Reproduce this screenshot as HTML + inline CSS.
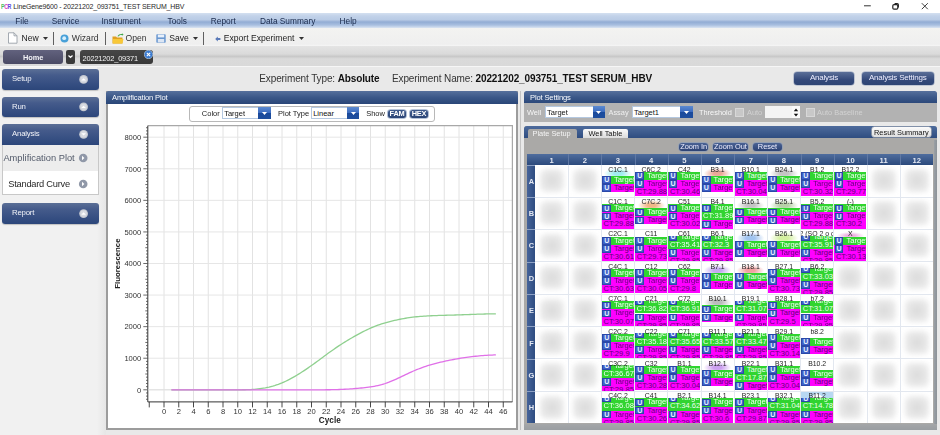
<!DOCTYPE html><html><head><meta charset="utf-8"><style>
html,body{margin:0;padding:0;width:940px;height:435px;overflow:hidden;background:#ebebeb;font-family:"Liberation Sans",sans-serif}
#wrap{position:absolute;left:0;top:0;width:940px;height:435px;overflow:hidden;filter:blur(0.4px)}
svg text{font-family:"Liberation Sans",sans-serif}
</style></head><body><div id="wrap">
<div style="position:absolute;left:0px;top:0px;width:940px;height:13px;background:#fff"></div>
<div style="position:absolute;left:1.0px;top:2.9px;font-size:7.4px;line-height:1;color:#333;font-weight:700;white-space:nowrap;letter-spacing:-0.6px;transform:scaleX(0.72);transform-origin:0 0"><span style="color:#48c060">P</span><span style="color:#e040b8">C</span><span style="color:#5a48e0">R</span></div>
<div style="position:absolute;left:13.3px;top:3.2px;font-size:7px;line-height:1;color:#2a2a2a;font-weight:400;white-space:nowrap;letter-spacing:-0.15px">LineGene9600 - 20221202_093751_TEST SERUM_HBV</div>
<svg style="position:absolute;left:860px;top:0" width="80" height="13"><path d="M4 5.8h6.8" stroke="#333" stroke-width="1"/><rect x="32.8" y="4.6" width="5" height="4.6" rx="1.2" fill="none" stroke="#222" stroke-width="1.2"/><path d="M34.6 3.6h2.6a1.2 1.2 0 0 1 1.2 1.2v2.6" fill="none" stroke="#222" stroke-width="1.1"/><path d="M61.8 3.2l6 6M67.8 3.2l-6 6" stroke="#333" stroke-width="0.95"/></svg>
<div style="position:absolute;left:0px;top:13px;width:940px;height:15.3px;background:linear-gradient(#d4e0f0 0%,#c2d2e9 20%,#b9cbe5 45%,#92acd4 60%,#a8bfe0 80%,#dae4f2 100%)"></div>
<div style="position:absolute;left:15.3px;top:17.2px;font-size:8.3px;line-height:1;color:#1a2a4c;font-weight:400;white-space:nowrap;">File</div>
<div style="position:absolute;left:51.7px;top:17.2px;font-size:8.3px;line-height:1;color:#1a2a4c;font-weight:400;white-space:nowrap;">Service</div>
<div style="position:absolute;left:101.5px;top:17.2px;font-size:8.3px;line-height:1;color:#1a2a4c;font-weight:400;white-space:nowrap;">Instrument</div>
<div style="position:absolute;left:167.6px;top:17.2px;font-size:8.3px;line-height:1;color:#1a2a4c;font-weight:400;white-space:nowrap;">Tools</div>
<div style="position:absolute;left:210.8px;top:17.2px;font-size:8.3px;line-height:1;color:#1a2a4c;font-weight:400;white-space:nowrap;">Report</div>
<div style="position:absolute;left:260px;top:17.2px;font-size:8.3px;line-height:1;color:#1a2a4c;font-weight:400;white-space:nowrap;">Data Summary</div>
<div style="position:absolute;left:339.6px;top:17.2px;font-size:8.3px;line-height:1;color:#1a2a4c;font-weight:400;white-space:nowrap;">Help</div>
<div style="position:absolute;left:0px;top:28.3px;width:940px;height:18.1px;background:linear-gradient(#f3f3f1,#efefef 90%,#f6f6f6 100%)"></div>
<svg style="position:absolute;left:7px;top:32px" width="12" height="12" viewBox="0 0 12 12"><path d="M1.5 0.8h5.5l3 3v7.4h-8.5z" fill="#fff" stroke="#9aa0a8" stroke-width="0.9"/><path d="M7 0.8v3h3" fill="none" stroke="#9aa0a8" stroke-width="0.9"/></svg>
<div style="position:absolute;left:21.5px;top:34.2px;font-size:8.6px;line-height:1;color:#222;font-weight:400;white-space:nowrap;">New</div>
<svg style="position:absolute;left:43px;top:37px" width="5" height="3"><path d="M0 0h5l-2.5 3z" fill="#333"/></svg>
<div style="position:absolute;left:52.5px;top:31.8px;width:1px;height:13px;background:#606060"></div>
<svg style="position:absolute;left:60px;top:34px" width="9" height="9"><circle cx="4.5" cy="4.5" r="4" fill="#48a0d8"/><circle cx="4.2" cy="4.2" r="1.9" fill="#d8f0fc"/></svg>
<div style="position:absolute;left:71.8px;top:34.2px;font-size:8.6px;line-height:1;color:#333;font-weight:400;white-space:nowrap;">Wizard</div>
<div style="position:absolute;left:105px;top:31.8px;width:1px;height:13px;background:#606060"></div>
<svg style="position:absolute;left:111.5px;top:32.5px" width="12" height="11" viewBox="0 0 12 11"><path d="M0.5 3.5h3.5l1 1h5.5v6h-10z" fill="#e0a020"/><path d="M0.8 6h10.7l-1.2 4.6h-9.5z" fill="#f8c838"/><path d="M5.5 3.2c1-2 3-2.6 4.6-2.2l-0.3-0.9 1.8 1.6-1.9 1.1 0.3-0.8c-1.4-0.3-2.9 0.2-3.5 1.4z" fill="#40a848"/></svg>
<div style="position:absolute;left:125.5px;top:34.2px;font-size:8.6px;line-height:1;color:#333;font-weight:400;white-space:nowrap;">Open</div>
<svg style="position:absolute;left:156px;top:33.5px" width="10" height="9" viewBox="0 0 10 9"><rect x="0.3" y="0.3" width="9.4" height="8.4" rx="0.8" fill="#6a98d0"/><rect x="1.8" y="0.6" width="6.4" height="2.8" fill="#e8f0fa"/><rect x="1.8" y="5" width="6.4" height="3.4" fill="#dce6f4"/></svg>
<div style="position:absolute;left:169.2px;top:34.2px;font-size:8.6px;line-height:1;color:#222;font-weight:400;white-space:nowrap;">Save</div>
<svg style="position:absolute;left:193px;top:37px" width="5" height="3"><path d="M0 0h5l-2.5 3z" fill="#333"/></svg>
<div style="position:absolute;left:203px;top:31.8px;width:1px;height:13px;background:#606060"></div>
<svg style="position:absolute;left:214.5px;top:35.5px" width="6" height="6"><path d="M0.2 3l2.6-2.6v1.6h2.6v2h-2.6v1.6z" fill="#5a7ab8"/></svg>
<div style="position:absolute;left:223.7px;top:34.2px;font-size:8.6px;line-height:1;color:#222;font-weight:400;white-space:nowrap;">Export Experiment</div>
<svg style="position:absolute;left:298.5px;top:37px" width="5" height="3"><path d="M0 0h5l-2.5 3z" fill="#333"/></svg>
<div style="position:absolute;left:0px;top:46.4px;width:940px;height:19.6px;background:linear-gradient(#e4e4e4 0%,#dadada 40%,#c8c8c8 52%,#dadada 64%,#d9d9d9 100%)"></div>
<div style="position:absolute;left:0px;top:66px;width:940px;height:1.2px;background:#f6f6f6"></div>
<div style="position:absolute;left:3.2px;top:50.4px;width:60px;height:13.8px;background:linear-gradient(#62627e,#4a4a64);border-radius:3px"></div>
<div style="position:absolute;left:3.2px;top:54px;font-size:7.4px;line-height:1;color:#f4f4f8;font-weight:700;white-space:nowrap;width:60px;text-align:center;letter-spacing:-0.1px">Home</div>
<div style="position:absolute;left:66px;top:50.4px;width:9px;height:13.8px;background:#3a3a3a;border-radius:2px"></div>
<svg style="position:absolute;left:68px;top:55px" width="5" height="4"><path d="M0.5 0.5l2 2 2-2" fill="none" stroke="#fff" stroke-width="1.2"/></svg>
<div style="position:absolute;left:80.4px;top:50.4px;width:72.4px;height:13.8px;background:linear-gradient(#464646,#383838);border-radius:3px"></div>
<div style="position:absolute;left:82.5px;top:54.8px;font-size:7.4px;line-height:1;color:#f4f4f4;font-weight:400;white-space:nowrap;letter-spacing:-0.15px">20221202_09371</div>
<svg style="position:absolute;left:144px;top:50px" width="9" height="9"><circle cx="4.5" cy="4.5" r="4.2" fill="#3a7ad0" stroke="#cde" stroke-width="0.6"/><path d="M2.8 2.8l3.4 3.4M6.2 2.8l-3.4 3.4" stroke="#fff" stroke-width="1.1"/></svg>
<div style="position:absolute;left:0px;top:67px;width:940px;height:368px;background:#e9e9e9"></div>
<div style="position:absolute;left:0px;top:67px;width:97px;height:368px;background:#f1f1f1"></div>
<div style="position:absolute;left:97px;top:91px;width:9px;height:344px;background:linear-gradient(90deg,#f1f1f1,#e6e6e6)"></div>
<div style="position:absolute;left:1.9px;top:69px;width:96.9px;height:20.8px;background:linear-gradient(#5b6f96 0%,#455b8b 30%,#364f82 70%,#2c467a 100%);border-radius:3px;box-shadow:0 1px 1px rgba(0,0,0,0.2)"></div><div style="position:absolute;left:12px;top:75.30000000000001px;font-size:7.8px;line-height:1;color:#f0f2f8;font-weight:400;white-space:nowrap;letter-spacing:-0.2px">Setup</div><svg style="position:absolute;left:0;top:0" width="100" height="435"><circle cx="83.6" cy="79.4" r="4.4" fill="#c4c8d0"/><circle cx="83.6" cy="79.4" r="3.2" fill="#d8dbe2"/><path d="M81.3 80.5l2.3-2.3 2.3 2.3z" fill="#fff"/></svg>
<div style="position:absolute;left:1.9px;top:96.7px;width:96.9px;height:20.3px;background:linear-gradient(#5b6f96 0%,#455b8b 30%,#364f82 70%,#2c467a 100%);border-radius:3px;box-shadow:0 1px 1px rgba(0,0,0,0.2)"></div><div style="position:absolute;left:12px;top:102.75000000000001px;font-size:7.8px;line-height:1;color:#f0f2f8;font-weight:400;white-space:nowrap;letter-spacing:-0.2px">Run</div><svg style="position:absolute;left:0;top:0" width="100" height="435"><circle cx="83.6" cy="106.85000000000001" r="4.4" fill="#c4c8d0"/><circle cx="83.6" cy="106.85000000000001" r="3.2" fill="#d8dbe2"/><path d="M81.3 107.95l2.3-2.3 2.3 2.3z" fill="#fff"/></svg>
<div style="position:absolute;left:1.9px;top:123.8px;width:96.9px;height:21px;background:linear-gradient(#5b6f96 0%,#455b8b 30%,#364f82 70%,#2c467a 100%);border-radius:3px 3px 0 0;box-shadow:0 1px 1px rgba(0,0,0,0.2)"></div><div style="position:absolute;left:12px;top:130.20000000000002px;font-size:7.8px;line-height:1;color:#f0f2f8;font-weight:400;white-space:nowrap;letter-spacing:-0.2px">Analysis</div><svg style="position:absolute;left:0;top:0" width="100" height="435"><circle cx="83.6" cy="134.3" r="4.4" fill="#c4c8d0"/><circle cx="83.6" cy="134.3" r="3.2" fill="#d8dbe2"/><path d="M81.3 133.20000000000002l2.3 2.3 2.3-2.3z" fill="#fff"/></svg>
<div style="position:absolute;left:1.9px;top:144.8px;width:96.9px;height:25.8px;background:#ededed;border-left:1px solid #c8c8c8;border-right:1px solid #c8c8c8;box-sizing:border-box"></div>
<div style="position:absolute;left:3.4px;top:154.4px;font-size:9.3px;line-height:1;color:#525a6a;font-weight:400;white-space:nowrap;letter-spacing:0px">Amplification Plot</div>
<div style="position:absolute;left:1.9px;top:170.6px;width:96.9px;height:24.7px;background:#fff;border:1px solid #c8c8c8;border-top:none;box-sizing:border-box"></div>
<div style="position:absolute;left:8.3px;top:180px;font-size:9.3px;line-height:1;color:#282828;font-weight:400;white-space:nowrap;letter-spacing:-0.25px">Standard Curve</div>
<svg style="position:absolute;left:78px;top:153px" width="11" height="10"><circle cx="5.2" cy="5" r="4.3" fill="#9098a8"/><path d="M4 2.8l2.4 2.2-2.4 2.2z" fill="#fff"/></svg>
<svg style="position:absolute;left:78px;top:178.7px" width="11" height="10"><circle cx="5.2" cy="5" r="4.3" fill="#9098a8"/><path d="M4 2.8l2.4 2.2-2.4 2.2z" fill="#fff"/></svg>
<div style="position:absolute;left:1.9px;top:203.4px;width:96.9px;height:20.3px;background:linear-gradient(#5b6f96 0%,#455b8b 30%,#364f82 70%,#2c467a 100%);border-radius:3px;box-shadow:0 1px 1px rgba(0,0,0,0.2)"></div><div style="position:absolute;left:12px;top:209.45000000000002px;font-size:7.8px;line-height:1;color:#f0f2f8;font-weight:400;white-space:nowrap;letter-spacing:-0.2px">Report</div><svg style="position:absolute;left:0;top:0" width="100" height="435"><circle cx="83.6" cy="213.55" r="4.4" fill="#c4c8d0"/><circle cx="83.6" cy="213.55" r="3.2" fill="#d8dbe2"/><path d="M81.3 214.65l2.3-2.3 2.3 2.3z" fill="#fff"/></svg>
<div style="position:absolute;left:259.3px;top:74.2px;font-size:10px;line-height:1;color:#333;font-weight:400;white-space:nowrap;letter-spacing:-0.12px">Experiment Type: <b style="color:#111">Absolute</b></div>
<div style="position:absolute;left:392px;top:74.2px;font-size:10px;line-height:1;color:#333;font-weight:400;white-space:nowrap;letter-spacing:-0.12px">Experiment Name: <b style="color:#111">20221202_093751_TEST SERUM_HBV</b></div>
<div style="position:absolute;left:794px;top:71.8px;width:60px;height:12.8px;background:linear-gradient(#5b6f98,#34497a 60%,#2e4574);border-radius:3px;box-shadow:0 0 0 0.6px #9aa6c0"><div style="font-size:8px;color:#eef;line-height:12.8px;text-align:center;white-space:nowrap;letter-spacing:-0.2px">Analysis</div></div>
<div style="position:absolute;left:861.8px;top:71.8px;width:71.8px;height:12.8px;background:linear-gradient(#5b6f98,#34497a 60%,#2e4574);border-radius:3px;box-shadow:0 0 0 0.6px #9aa6c0"><div style="font-size:8px;color:#eef;line-height:12.8px;text-align:center;white-space:nowrap;letter-spacing:-0.2px">Analysis Settings</div></div>
<div style="position:absolute;left:105.8px;top:90.8px;width:412.5px;height:339px;background:#fff;border:2px solid #9c9c9c;border-top:none;box-sizing:border-box"></div>
<div style="position:absolute;left:105.8px;top:90.8px;width:412.5px;height:13px;background:linear-gradient(#56709c,#3a5788 50%,#2a4678);border-radius:2.5px 2.5px 0 0"></div>
<div style="position:absolute;left:112px;top:93.6px;font-size:7.6px;line-height:1;color:#fafcff;font-weight:400;white-space:nowrap;letter-spacing:-0.15px">Amplification Plot</div>
<div style="position:absolute;left:189px;top:106px;width:246px;height:15.5px;border:1px solid #b8b8b8;border-radius:3px;background:#fff;box-sizing:border-box"></div>
<div style="position:absolute;left:201.8px;top:110.3px;font-size:7.5px;line-height:1;color:#222;font-weight:400;white-space:nowrap;">Color</div>
<div style="position:absolute;left:222.2px;top:107.4px;width:49.1px;height:11.4px;background:#fff;border:1px solid #b4c8e0;box-sizing:border-box"></div><div style="position:absolute;left:224.2px;top:110.4px;font-size:7.5px;line-height:1;color:#111;font-weight:400;white-space:nowrap;">Target</div><div style="position:absolute;left:258.3px;top:107.4px;width:13.0px;height:11.4px;background:linear-gradient(#5c8ad0 0%,#3c6cc0 48%,#1a4a9c 52%,#1e4e9e 100%)"></div><svg style="position:absolute;left:262.3px;top:111.9px" width="5" height="3.5"><path d="M0 0h5l-2.5 3z" fill="#fff"/></svg>
<div style="position:absolute;left:278px;top:110.3px;font-size:7.5px;line-height:1;color:#222;font-weight:400;white-space:nowrap;">Plot Type</div>
<div style="position:absolute;left:311.2px;top:107.4px;width:48.2px;height:11.4px;background:#fff;border:1px solid #b4c8e0;box-sizing:border-box"></div><div style="position:absolute;left:313.2px;top:110.4px;font-size:7.5px;line-height:1;color:#111;font-weight:400;white-space:nowrap;">Linear</div><div style="position:absolute;left:347px;top:107.4px;width:12.399999999999977px;height:11.4px;background:linear-gradient(#5c8ad0 0%,#3c6cc0 48%,#1a4a9c 52%,#1e4e9e 100%)"></div><svg style="position:absolute;left:350.70000000000005px;top:111.9px" width="5" height="3.5"><path d="M0 0h5l-2.5 3z" fill="#fff"/></svg>
<div style="position:absolute;left:366.2px;top:110.3px;font-size:7.5px;line-height:1;color:#222;font-weight:400;white-space:nowrap;">Show</div>
<div style="position:absolute;left:388px;top:109.6px;width:18.1px;height:8.6px;background:linear-gradient(#3e5a8c,#2a4476);border-radius:2.5px;box-shadow:0 0 0 0.8px #9fb0cc"><div style="font-size:7.4px;font-weight:700;color:#fff;line-height:8.6px;text-align:center;letter-spacing:-0.2px">FAM</div></div>
<div style="position:absolute;left:409.6px;top:109.6px;width:18.8px;height:8.6px;background:linear-gradient(#3e5a8c,#2a4476);border-radius:2.5px;box-shadow:0 0 0 0.8px #9fb0cc"><div style="font-size:7.4px;font-weight:700;color:#fff;line-height:8.6px;text-align:center;letter-spacing:-0.2px">HEX</div></div>
<svg style="position:absolute;left:0;top:0" width="940" height="435">
<line x1="164.0" y1="125.7" x2="164.0" y2="401.9" stroke="#e2e2e2" stroke-width="1"/>
<line x1="178.75" y1="125.7" x2="178.75" y2="401.9" stroke="#e2e2e2" stroke-width="1"/>
<line x1="193.5" y1="125.7" x2="193.5" y2="401.9" stroke="#e2e2e2" stroke-width="1"/>
<line x1="208.25" y1="125.7" x2="208.25" y2="401.9" stroke="#e2e2e2" stroke-width="1"/>
<line x1="223.0" y1="125.7" x2="223.0" y2="401.9" stroke="#e2e2e2" stroke-width="1"/>
<line x1="237.75" y1="125.7" x2="237.75" y2="401.9" stroke="#e2e2e2" stroke-width="1"/>
<line x1="252.5" y1="125.7" x2="252.5" y2="401.9" stroke="#e2e2e2" stroke-width="1"/>
<line x1="267.25" y1="125.7" x2="267.25" y2="401.9" stroke="#e2e2e2" stroke-width="1"/>
<line x1="282.0" y1="125.7" x2="282.0" y2="401.9" stroke="#e2e2e2" stroke-width="1"/>
<line x1="296.75" y1="125.7" x2="296.75" y2="401.9" stroke="#e2e2e2" stroke-width="1"/>
<line x1="311.5" y1="125.7" x2="311.5" y2="401.9" stroke="#e2e2e2" stroke-width="1"/>
<line x1="326.25" y1="125.7" x2="326.25" y2="401.9" stroke="#e2e2e2" stroke-width="1"/>
<line x1="341.0" y1="125.7" x2="341.0" y2="401.9" stroke="#e2e2e2" stroke-width="1"/>
<line x1="355.75" y1="125.7" x2="355.75" y2="401.9" stroke="#e2e2e2" stroke-width="1"/>
<line x1="370.5" y1="125.7" x2="370.5" y2="401.9" stroke="#e2e2e2" stroke-width="1"/>
<line x1="385.25" y1="125.7" x2="385.25" y2="401.9" stroke="#e2e2e2" stroke-width="1"/>
<line x1="400.0" y1="125.7" x2="400.0" y2="401.9" stroke="#e2e2e2" stroke-width="1"/>
<line x1="414.75" y1="125.7" x2="414.75" y2="401.9" stroke="#e2e2e2" stroke-width="1"/>
<line x1="429.5" y1="125.7" x2="429.5" y2="401.9" stroke="#e2e2e2" stroke-width="1"/>
<line x1="444.25" y1="125.7" x2="444.25" y2="401.9" stroke="#e2e2e2" stroke-width="1"/>
<line x1="459.0" y1="125.7" x2="459.0" y2="401.9" stroke="#e2e2e2" stroke-width="1"/>
<line x1="473.75" y1="125.7" x2="473.75" y2="401.9" stroke="#e2e2e2" stroke-width="1"/>
<line x1="488.5" y1="125.7" x2="488.5" y2="401.9" stroke="#e2e2e2" stroke-width="1"/>
<line x1="503.25" y1="125.7" x2="503.25" y2="401.9" stroke="#e2e2e2" stroke-width="1"/>
<line x1="147.8" y1="389.8" x2="512.4" y2="389.8" stroke="#e6e6e6" stroke-width="1"/>
<line x1="147.8" y1="358.225" x2="512.4" y2="358.225" stroke="#e6e6e6" stroke-width="1"/>
<line x1="147.8" y1="326.65000000000003" x2="512.4" y2="326.65000000000003" stroke="#e6e6e6" stroke-width="1"/>
<line x1="147.8" y1="295.07500000000005" x2="512.4" y2="295.07500000000005" stroke="#e6e6e6" stroke-width="1"/>
<line x1="147.8" y1="263.5" x2="512.4" y2="263.5" stroke="#e6e6e6" stroke-width="1"/>
<line x1="147.8" y1="231.925" x2="512.4" y2="231.925" stroke="#e6e6e6" stroke-width="1"/>
<line x1="147.8" y1="200.35000000000002" x2="512.4" y2="200.35000000000002" stroke="#e6e6e6" stroke-width="1"/>
<line x1="147.8" y1="168.775" x2="512.4" y2="168.775" stroke="#e6e6e6" stroke-width="1"/>
<line x1="147.8" y1="137.20000000000002" x2="512.4" y2="137.20000000000002" stroke="#e6e6e6" stroke-width="1"/>
<path d="M147.8 125.7H512.4V401.9" fill="none" stroke="#a8a8a8" stroke-width="1.2"/>
<line x1="147.8" y1="125.7" x2="147.8" y2="401.9" stroke="#333" stroke-width="1"/>
<line x1="147.8" y1="401.9" x2="512.4" y2="401.9" stroke="#333" stroke-width="1"/>
<line x1="146.0" y1="399.27250000000004" x2="147.8" y2="399.27250000000004" stroke="#444" stroke-width="0.8"/>
<line x1="146.0" y1="396.115" x2="147.8" y2="396.115" stroke="#444" stroke-width="0.8"/>
<line x1="146.0" y1="392.95750000000004" x2="147.8" y2="392.95750000000004" stroke="#444" stroke-width="0.8"/>
<line x1="143.3" y1="389.8" x2="147.8" y2="389.8" stroke="#444" stroke-width="0.8"/>
<line x1="146.0" y1="386.6425" x2="147.8" y2="386.6425" stroke="#444" stroke-width="0.8"/>
<line x1="146.0" y1="383.485" x2="147.8" y2="383.485" stroke="#444" stroke-width="0.8"/>
<line x1="146.0" y1="380.3275" x2="147.8" y2="380.3275" stroke="#444" stroke-width="0.8"/>
<line x1="146.0" y1="377.17" x2="147.8" y2="377.17" stroke="#444" stroke-width="0.8"/>
<line x1="145.3" y1="374.0125" x2="147.8" y2="374.0125" stroke="#444" stroke-width="0.8"/>
<line x1="146.0" y1="370.855" x2="147.8" y2="370.855" stroke="#444" stroke-width="0.8"/>
<line x1="146.0" y1="367.6975" x2="147.8" y2="367.6975" stroke="#444" stroke-width="0.8"/>
<line x1="146.0" y1="364.54" x2="147.8" y2="364.54" stroke="#444" stroke-width="0.8"/>
<line x1="146.0" y1="361.3825" x2="147.8" y2="361.3825" stroke="#444" stroke-width="0.8"/>
<line x1="143.3" y1="358.225" x2="147.8" y2="358.225" stroke="#444" stroke-width="0.8"/>
<line x1="146.0" y1="355.0675" x2="147.8" y2="355.0675" stroke="#444" stroke-width="0.8"/>
<line x1="146.0" y1="351.91" x2="147.8" y2="351.91" stroke="#444" stroke-width="0.8"/>
<line x1="146.0" y1="348.7525" x2="147.8" y2="348.7525" stroke="#444" stroke-width="0.8"/>
<line x1="146.0" y1="345.595" x2="147.8" y2="345.595" stroke="#444" stroke-width="0.8"/>
<line x1="145.3" y1="342.4375" x2="147.8" y2="342.4375" stroke="#444" stroke-width="0.8"/>
<line x1="146.0" y1="339.28000000000003" x2="147.8" y2="339.28000000000003" stroke="#444" stroke-width="0.8"/>
<line x1="146.0" y1="336.1225" x2="147.8" y2="336.1225" stroke="#444" stroke-width="0.8"/>
<line x1="146.0" y1="332.96500000000003" x2="147.8" y2="332.96500000000003" stroke="#444" stroke-width="0.8"/>
<line x1="146.0" y1="329.8075" x2="147.8" y2="329.8075" stroke="#444" stroke-width="0.8"/>
<line x1="143.3" y1="326.65000000000003" x2="147.8" y2="326.65000000000003" stroke="#444" stroke-width="0.8"/>
<line x1="146.0" y1="323.4925" x2="147.8" y2="323.4925" stroke="#444" stroke-width="0.8"/>
<line x1="146.0" y1="320.33500000000004" x2="147.8" y2="320.33500000000004" stroke="#444" stroke-width="0.8"/>
<line x1="146.0" y1="317.1775" x2="147.8" y2="317.1775" stroke="#444" stroke-width="0.8"/>
<line x1="146.0" y1="314.02" x2="147.8" y2="314.02" stroke="#444" stroke-width="0.8"/>
<line x1="145.3" y1="310.8625" x2="147.8" y2="310.8625" stroke="#444" stroke-width="0.8"/>
<line x1="146.0" y1="307.70500000000004" x2="147.8" y2="307.70500000000004" stroke="#444" stroke-width="0.8"/>
<line x1="146.0" y1="304.5475" x2="147.8" y2="304.5475" stroke="#444" stroke-width="0.8"/>
<line x1="146.0" y1="301.39" x2="147.8" y2="301.39" stroke="#444" stroke-width="0.8"/>
<line x1="146.0" y1="298.2325" x2="147.8" y2="298.2325" stroke="#444" stroke-width="0.8"/>
<line x1="143.3" y1="295.07500000000005" x2="147.8" y2="295.07500000000005" stroke="#444" stroke-width="0.8"/>
<line x1="146.0" y1="291.9175" x2="147.8" y2="291.9175" stroke="#444" stroke-width="0.8"/>
<line x1="146.0" y1="288.76" x2="147.8" y2="288.76" stroke="#444" stroke-width="0.8"/>
<line x1="146.0" y1="285.6025" x2="147.8" y2="285.6025" stroke="#444" stroke-width="0.8"/>
<line x1="146.0" y1="282.44500000000005" x2="147.8" y2="282.44500000000005" stroke="#444" stroke-width="0.8"/>
<line x1="145.3" y1="279.2875" x2="147.8" y2="279.2875" stroke="#444" stroke-width="0.8"/>
<line x1="146.0" y1="276.13" x2="147.8" y2="276.13" stroke="#444" stroke-width="0.8"/>
<line x1="146.0" y1="272.9725" x2="147.8" y2="272.9725" stroke="#444" stroke-width="0.8"/>
<line x1="146.0" y1="269.815" x2="147.8" y2="269.815" stroke="#444" stroke-width="0.8"/>
<line x1="146.0" y1="266.6575" x2="147.8" y2="266.6575" stroke="#444" stroke-width="0.8"/>
<line x1="143.3" y1="263.5" x2="147.8" y2="263.5" stroke="#444" stroke-width="0.8"/>
<line x1="146.0" y1="260.34250000000003" x2="147.8" y2="260.34250000000003" stroke="#444" stroke-width="0.8"/>
<line x1="146.0" y1="257.185" x2="147.8" y2="257.185" stroke="#444" stroke-width="0.8"/>
<line x1="146.0" y1="254.0275" x2="147.8" y2="254.0275" stroke="#444" stroke-width="0.8"/>
<line x1="146.0" y1="250.87" x2="147.8" y2="250.87" stroke="#444" stroke-width="0.8"/>
<line x1="145.3" y1="247.7125" x2="147.8" y2="247.7125" stroke="#444" stroke-width="0.8"/>
<line x1="146.0" y1="244.555" x2="147.8" y2="244.555" stroke="#444" stroke-width="0.8"/>
<line x1="146.0" y1="241.3975" x2="147.8" y2="241.3975" stroke="#444" stroke-width="0.8"/>
<line x1="146.0" y1="238.24" x2="147.8" y2="238.24" stroke="#444" stroke-width="0.8"/>
<line x1="146.0" y1="235.0825" x2="147.8" y2="235.0825" stroke="#444" stroke-width="0.8"/>
<line x1="143.3" y1="231.925" x2="147.8" y2="231.925" stroke="#444" stroke-width="0.8"/>
<line x1="146.0" y1="228.7675" x2="147.8" y2="228.7675" stroke="#444" stroke-width="0.8"/>
<line x1="146.0" y1="225.61" x2="147.8" y2="225.61" stroke="#444" stroke-width="0.8"/>
<line x1="146.0" y1="222.45250000000001" x2="147.8" y2="222.45250000000001" stroke="#444" stroke-width="0.8"/>
<line x1="146.0" y1="219.29500000000002" x2="147.8" y2="219.29500000000002" stroke="#444" stroke-width="0.8"/>
<line x1="145.3" y1="216.13750000000002" x2="147.8" y2="216.13750000000002" stroke="#444" stroke-width="0.8"/>
<line x1="146.0" y1="212.98000000000002" x2="147.8" y2="212.98000000000002" stroke="#444" stroke-width="0.8"/>
<line x1="146.0" y1="209.82250000000002" x2="147.8" y2="209.82250000000002" stroke="#444" stroke-width="0.8"/>
<line x1="146.0" y1="206.66500000000002" x2="147.8" y2="206.66500000000002" stroke="#444" stroke-width="0.8"/>
<line x1="146.0" y1="203.50750000000002" x2="147.8" y2="203.50750000000002" stroke="#444" stroke-width="0.8"/>
<line x1="143.3" y1="200.35000000000002" x2="147.8" y2="200.35000000000002" stroke="#444" stroke-width="0.8"/>
<line x1="146.0" y1="197.19250000000002" x2="147.8" y2="197.19250000000002" stroke="#444" stroke-width="0.8"/>
<line x1="146.0" y1="194.03500000000003" x2="147.8" y2="194.03500000000003" stroke="#444" stroke-width="0.8"/>
<line x1="146.0" y1="190.87750000000003" x2="147.8" y2="190.87750000000003" stroke="#444" stroke-width="0.8"/>
<line x1="146.0" y1="187.72000000000003" x2="147.8" y2="187.72000000000003" stroke="#444" stroke-width="0.8"/>
<line x1="145.3" y1="184.56250000000003" x2="147.8" y2="184.56250000000003" stroke="#444" stroke-width="0.8"/>
<line x1="146.0" y1="181.40500000000003" x2="147.8" y2="181.40500000000003" stroke="#444" stroke-width="0.8"/>
<line x1="146.0" y1="178.24750000000003" x2="147.8" y2="178.24750000000003" stroke="#444" stroke-width="0.8"/>
<line x1="146.0" y1="175.09000000000003" x2="147.8" y2="175.09000000000003" stroke="#444" stroke-width="0.8"/>
<line x1="146.0" y1="171.93250000000003" x2="147.8" y2="171.93250000000003" stroke="#444" stroke-width="0.8"/>
<line x1="143.3" y1="168.775" x2="147.8" y2="168.775" stroke="#444" stroke-width="0.8"/>
<line x1="146.0" y1="165.6175" x2="147.8" y2="165.6175" stroke="#444" stroke-width="0.8"/>
<line x1="146.0" y1="162.46" x2="147.8" y2="162.46" stroke="#444" stroke-width="0.8"/>
<line x1="146.0" y1="159.3025" x2="147.8" y2="159.3025" stroke="#444" stroke-width="0.8"/>
<line x1="146.0" y1="156.145" x2="147.8" y2="156.145" stroke="#444" stroke-width="0.8"/>
<line x1="145.3" y1="152.9875" x2="147.8" y2="152.9875" stroke="#444" stroke-width="0.8"/>
<line x1="146.0" y1="149.83" x2="147.8" y2="149.83" stroke="#444" stroke-width="0.8"/>
<line x1="146.0" y1="146.6725" x2="147.8" y2="146.6725" stroke="#444" stroke-width="0.8"/>
<line x1="146.0" y1="143.51500000000001" x2="147.8" y2="143.51500000000001" stroke="#444" stroke-width="0.8"/>
<line x1="146.0" y1="140.35750000000002" x2="147.8" y2="140.35750000000002" stroke="#444" stroke-width="0.8"/>
<line x1="143.3" y1="137.20000000000002" x2="147.8" y2="137.20000000000002" stroke="#444" stroke-width="0.8"/>
<line x1="146.0" y1="134.04250000000002" x2="147.8" y2="134.04250000000002" stroke="#444" stroke-width="0.8"/>
<line x1="146.0" y1="130.88500000000005" x2="147.8" y2="130.88500000000005" stroke="#444" stroke-width="0.8"/>
<line x1="146.0" y1="127.72750000000002" x2="147.8" y2="127.72750000000002" stroke="#444" stroke-width="0.8"/>
<text x="141.3" y="392.6" font-size="7.6" text-anchor="end" fill="#333">0</text>
<text x="141.3" y="361.02500000000003" font-size="7.6" text-anchor="end" fill="#333">1000</text>
<text x="141.3" y="329.45000000000005" font-size="7.6" text-anchor="end" fill="#333">2000</text>
<text x="141.3" y="297.87500000000006" font-size="7.6" text-anchor="end" fill="#333">3000</text>
<text x="141.3" y="266.3" font-size="7.6" text-anchor="end" fill="#333">4000</text>
<text x="141.3" y="234.72500000000002" font-size="7.6" text-anchor="end" fill="#333">5000</text>
<text x="141.3" y="203.15000000000003" font-size="7.6" text-anchor="end" fill="#333">6000</text>
<text x="141.3" y="171.57500000000002" font-size="7.6" text-anchor="end" fill="#333">7000</text>
<text x="141.3" y="140.00000000000003" font-size="7.6" text-anchor="end" fill="#333">8000</text>
<line x1="149.25" y1="401.9" x2="149.25" y2="407.4" stroke="#333" stroke-width="0.9"/>
<line x1="164.0" y1="401.9" x2="164.0" y2="407.4" stroke="#333" stroke-width="0.9"/>
<text x="164.0" y="413.9" font-size="7.6" text-anchor="middle" fill="#333">0</text>
<line x1="178.75" y1="401.9" x2="178.75" y2="407.4" stroke="#333" stroke-width="0.9"/>
<text x="178.75" y="413.9" font-size="7.6" text-anchor="middle" fill="#333">2</text>
<line x1="193.5" y1="401.9" x2="193.5" y2="407.4" stroke="#333" stroke-width="0.9"/>
<text x="193.5" y="413.9" font-size="7.6" text-anchor="middle" fill="#333">4</text>
<line x1="208.25" y1="401.9" x2="208.25" y2="407.4" stroke="#333" stroke-width="0.9"/>
<text x="208.25" y="413.9" font-size="7.6" text-anchor="middle" fill="#333">6</text>
<line x1="223.0" y1="401.9" x2="223.0" y2="407.4" stroke="#333" stroke-width="0.9"/>
<text x="223.0" y="413.9" font-size="7.6" text-anchor="middle" fill="#333">8</text>
<line x1="237.75" y1="401.9" x2="237.75" y2="407.4" stroke="#333" stroke-width="0.9"/>
<text x="237.75" y="413.9" font-size="7.6" text-anchor="middle" fill="#333">10</text>
<line x1="252.5" y1="401.9" x2="252.5" y2="407.4" stroke="#333" stroke-width="0.9"/>
<text x="252.5" y="413.9" font-size="7.6" text-anchor="middle" fill="#333">12</text>
<line x1="267.25" y1="401.9" x2="267.25" y2="407.4" stroke="#333" stroke-width="0.9"/>
<text x="267.25" y="413.9" font-size="7.6" text-anchor="middle" fill="#333">14</text>
<line x1="282.0" y1="401.9" x2="282.0" y2="407.4" stroke="#333" stroke-width="0.9"/>
<text x="282.0" y="413.9" font-size="7.6" text-anchor="middle" fill="#333">16</text>
<line x1="296.75" y1="401.9" x2="296.75" y2="407.4" stroke="#333" stroke-width="0.9"/>
<text x="296.75" y="413.9" font-size="7.6" text-anchor="middle" fill="#333">18</text>
<line x1="311.5" y1="401.9" x2="311.5" y2="407.4" stroke="#333" stroke-width="0.9"/>
<text x="311.5" y="413.9" font-size="7.6" text-anchor="middle" fill="#333">20</text>
<line x1="326.25" y1="401.9" x2="326.25" y2="407.4" stroke="#333" stroke-width="0.9"/>
<text x="326.25" y="413.9" font-size="7.6" text-anchor="middle" fill="#333">22</text>
<line x1="341.0" y1="401.9" x2="341.0" y2="407.4" stroke="#333" stroke-width="0.9"/>
<text x="341.0" y="413.9" font-size="7.6" text-anchor="middle" fill="#333">24</text>
<line x1="355.75" y1="401.9" x2="355.75" y2="407.4" stroke="#333" stroke-width="0.9"/>
<text x="355.75" y="413.9" font-size="7.6" text-anchor="middle" fill="#333">26</text>
<line x1="370.5" y1="401.9" x2="370.5" y2="407.4" stroke="#333" stroke-width="0.9"/>
<text x="370.5" y="413.9" font-size="7.6" text-anchor="middle" fill="#333">28</text>
<line x1="385.25" y1="401.9" x2="385.25" y2="407.4" stroke="#333" stroke-width="0.9"/>
<text x="385.25" y="413.9" font-size="7.6" text-anchor="middle" fill="#333">30</text>
<line x1="400.0" y1="401.9" x2="400.0" y2="407.4" stroke="#333" stroke-width="0.9"/>
<text x="400.0" y="413.9" font-size="7.6" text-anchor="middle" fill="#333">32</text>
<line x1="414.75" y1="401.9" x2="414.75" y2="407.4" stroke="#333" stroke-width="0.9"/>
<text x="414.75" y="413.9" font-size="7.6" text-anchor="middle" fill="#333">34</text>
<line x1="429.5" y1="401.9" x2="429.5" y2="407.4" stroke="#333" stroke-width="0.9"/>
<text x="429.5" y="413.9" font-size="7.6" text-anchor="middle" fill="#333">36</text>
<line x1="444.25" y1="401.9" x2="444.25" y2="407.4" stroke="#333" stroke-width="0.9"/>
<text x="444.25" y="413.9" font-size="7.6" text-anchor="middle" fill="#333">38</text>
<line x1="459.0" y1="401.9" x2="459.0" y2="407.4" stroke="#333" stroke-width="0.9"/>
<text x="459.0" y="413.9" font-size="7.6" text-anchor="middle" fill="#333">40</text>
<line x1="473.75" y1="401.9" x2="473.75" y2="407.4" stroke="#333" stroke-width="0.9"/>
<text x="473.75" y="413.9" font-size="7.6" text-anchor="middle" fill="#333">42</text>
<line x1="488.5" y1="401.9" x2="488.5" y2="407.4" stroke="#333" stroke-width="0.9"/>
<text x="488.5" y="413.9" font-size="7.6" text-anchor="middle" fill="#333">44</text>
<line x1="503.25" y1="401.9" x2="503.25" y2="407.4" stroke="#333" stroke-width="0.9"/>
<text x="503.25" y="413.9" font-size="7.6" text-anchor="middle" fill="#333">46</text>
<text x="329.8" y="423.2" font-size="8.2" font-weight="700" text-anchor="middle" fill="#222">Cycle</text>
<text transform="translate(119.6,263.6) rotate(-90)" font-size="7.8" font-weight="700" text-anchor="middle" fill="#222">Fluorescence</text>
<line x1="147.8" y1="389.8" x2="171.375" y2="389.8" stroke="#e0e0e0" stroke-width="1"/>
<path d="M171.38 389.80 L173.22 389.80 L175.06 389.80 L176.91 389.80 L178.75 389.80 L180.59 389.80 L182.44 389.80 L184.28 389.80 L186.12 389.80 L187.97 389.80 L189.81 389.80 L191.66 389.80 L193.50 389.80 L195.34 389.80 L197.19 389.80 L199.03 389.80 L200.88 389.80 L202.72 389.80 L204.56 389.80 L206.41 389.80 L208.25 389.80 L210.09 389.80 L211.94 389.80 L213.78 389.80 L215.62 389.80 L217.47 389.80 L219.31 389.80 L221.16 389.80 L223.00 389.80 L224.84 389.80 L226.69 389.80 L228.53 389.80 L230.38 389.80 L232.22 389.80 L234.06 389.80 L235.91 389.80 L237.75 389.80 L239.59 389.79 L241.44 389.78 L243.28 389.76 L245.12 389.73 L246.97 389.68 L248.81 389.62 L250.66 389.54 L252.50 389.43 L254.34 389.30 L256.19 389.14 L258.03 388.95 L259.88 388.73 L261.72 388.47 L263.56 388.18 L265.41 387.85 L267.25 387.47 L269.09 387.06 L270.94 386.60 L272.78 386.10 L274.62 385.55 L276.47 384.95 L278.31 384.31 L280.16 383.61 L282.00 382.87 L283.84 382.07 L285.69 381.22 L287.53 380.33 L289.38 379.40 L291.22 378.42 L293.06 377.40 L294.91 376.35 L296.75 375.26 L298.59 374.14 L300.44 372.99 L302.28 371.81 L304.12 370.60 L305.97 369.37 L307.81 368.11 L309.66 366.83 L311.50 365.53 L313.34 364.20 L315.19 362.86 L317.03 361.51 L318.88 360.15 L320.72 358.78 L322.56 357.42 L324.41 356.05 L326.25 354.70 L328.09 353.35 L329.94 352.02 L331.78 350.71 L333.62 349.41 L335.47 348.13 L337.31 346.88 L339.16 345.65 L341.00 344.45 L342.84 343.27 L344.69 342.12 L346.53 341.00 L348.38 339.89 L350.22 338.80 L352.06 337.74 L353.91 336.68 L355.75 335.65 L357.59 334.63 L359.44 333.62 L361.28 332.64 L363.12 331.68 L364.97 330.75 L366.81 329.85 L368.66 328.98 L370.50 328.15 L372.34 327.35 L374.19 326.60 L376.03 325.88 L377.88 325.20 L379.72 324.56 L381.56 323.94 L383.41 323.36 L385.25 322.81 L387.09 322.28 L388.94 321.78 L390.78 321.30 L392.62 320.85 L394.47 320.42 L396.31 320.01 L398.16 319.61 L400.00 319.24 L401.84 318.89 L403.69 318.56 L405.53 318.24 L407.38 317.95 L409.22 317.67 L411.06 317.42 L412.91 317.19 L414.75 316.97 L416.59 316.77 L418.44 316.60 L420.28 316.44 L422.12 316.29 L423.97 316.16 L425.81 316.05 L427.66 315.94 L429.50 315.84 L431.34 315.76 L433.19 315.68 L435.03 315.60 L436.88 315.53 L438.72 315.47 L440.56 315.41 L442.41 315.35 L444.25 315.30 L446.09 315.24 L447.94 315.19 L449.78 315.14 L451.62 315.09 L453.47 315.04 L455.31 314.99 L457.16 314.93 L459.00 314.87 L460.84 314.81 L462.69 314.75 L464.53 314.69 L466.38 314.62 L468.22 314.55 L470.06 314.48 L471.91 314.42 L473.75 314.35 L475.59 314.28 L477.44 314.22 L479.28 314.16 L481.12 314.10 L482.97 314.05 L484.81 313.99 L486.66 313.95 L488.50 313.91 L490.34 313.87 L492.19 313.83 L494.03 313.81 L495.88 313.78" fill="none" stroke="#8fd08f" stroke-width="1.3"/>
<path d="M171.38 389.80 L173.22 389.80 L175.06 389.80 L176.91 389.80 L178.75 389.80 L180.59 389.80 L182.44 389.80 L184.28 389.80 L186.12 389.80 L187.97 389.80 L189.81 389.80 L191.66 389.80 L193.50 389.80 L195.34 389.80 L197.19 389.80 L199.03 389.80 L200.88 389.80 L202.72 389.80 L204.56 389.80 L206.41 389.80 L208.25 389.80 L210.09 389.80 L211.94 389.80 L213.78 389.80 L215.62 389.80 L217.47 389.80 L219.31 389.80 L221.16 389.80 L223.00 389.80 L224.84 389.80 L226.69 389.80 L228.53 389.80 L230.38 389.80 L232.22 389.80 L234.06 389.80 L235.91 389.80 L237.75 389.80 L239.59 389.80 L241.44 389.80 L243.28 389.80 L245.12 389.80 L246.97 389.80 L248.81 389.80 L250.66 389.80 L252.50 389.80 L254.34 389.80 L256.19 389.80 L258.03 389.80 L259.88 389.80 L261.72 389.80 L263.56 389.80 L265.41 389.80 L267.25 389.80 L269.09 389.80 L270.94 389.80 L272.78 389.80 L274.62 389.80 L276.47 389.80 L278.31 389.80 L280.16 389.80 L282.00 389.80 L283.84 389.80 L285.69 389.80 L287.53 389.80 L289.38 389.80 L291.22 389.80 L293.06 389.80 L294.91 389.80 L296.75 389.80 L298.59 389.80 L300.44 389.80 L302.28 389.80 L304.12 389.80 L305.97 389.80 L307.81 389.80 L309.66 389.80 L311.50 389.80 L313.34 389.80 L315.19 389.80 L317.03 389.80 L318.88 389.80 L320.72 389.79 L322.56 389.79 L324.41 389.78 L326.25 389.77 L328.09 389.76 L329.94 389.74 L331.78 389.71 L333.62 389.68 L335.47 389.64 L337.31 389.58 L339.16 389.52 L341.00 389.45 L342.84 389.36 L344.69 389.27 L346.53 389.16 L348.38 389.05 L350.22 388.92 L352.06 388.79 L353.91 388.66 L355.75 388.51 L357.59 388.36 L359.44 388.20 L361.28 388.02 L363.12 387.84 L364.97 387.64 L366.81 387.42 L368.66 387.18 L370.50 386.91 L372.34 386.62 L374.19 386.30 L376.03 385.94 L377.88 385.54 L379.72 385.10 L381.56 384.62 L383.41 384.08 L385.25 383.50 L387.09 382.86 L388.94 382.18 L390.78 381.45 L392.62 380.68 L394.47 379.88 L396.31 379.04 L398.16 378.19 L400.00 377.32 L401.84 376.44 L403.69 375.56 L405.53 374.68 L407.38 373.80 L409.22 372.94 L411.06 372.10 L412.91 371.28 L414.75 370.48 L416.59 369.71 L418.44 368.98 L420.28 368.27 L422.12 367.60 L423.97 366.95 L425.81 366.33 L427.66 365.74 L429.50 365.17 L431.34 364.63 L433.19 364.11 L435.03 363.61 L436.88 363.13 L438.72 362.67 L440.56 362.22 L442.41 361.79 L444.25 361.38 L446.09 360.98 L447.94 360.59 L449.78 360.21 L451.62 359.85 L453.47 359.49 L455.31 359.15 L457.16 358.83 L459.00 358.51 L460.84 358.21 L462.69 357.92 L464.53 357.64 L466.38 357.37 L468.22 357.12 L470.06 356.88 L471.91 356.65 L473.75 356.44 L475.59 356.24 L477.44 356.05 L479.28 355.88 L481.12 355.71 L482.97 355.57 L484.81 355.43 L486.66 355.31 L488.50 355.21 L490.34 355.12 L492.19 355.04 L494.03 354.97 L495.88 354.91" fill="none" stroke="#e070e8" stroke-width="1.3"/>
</svg>
<div style="position:absolute;left:520px;top:91px;width:1.2px;height:339px;background:#c4c4c4"></div>
<div style="position:absolute;left:523.8px;top:90.8px;width:413px;height:12.8px;background:linear-gradient(#56709c,#3a5788 50%,#2a4678);border-radius:2.5px 2.5px 0 0"></div>
<div style="position:absolute;left:530px;top:93.6px;font-size:7.6px;line-height:1;color:#fafcff;font-weight:400;white-space:nowrap;letter-spacing:-0.15px">Plot Settings</div>
<div style="position:absolute;left:523.8px;top:103.4px;width:413px;height:18.8px;background:#b2b2b2"></div>
<div style="position:absolute;left:527px;top:109.2px;font-size:7.4px;line-height:1;color:#f6f6f6;font-weight:400;white-space:nowrap;">Well</div>
<div style="position:absolute;left:545px;top:106.3px;width:59.7px;height:11.7px;background:#fff;border:1px solid #b4c8e0;box-sizing:border-box"></div><div style="position:absolute;left:547px;top:109.3px;font-size:7.5px;line-height:1;color:#111;font-weight:400;white-space:nowrap;">Target</div><div style="position:absolute;left:592.5px;top:106.3px;width:12.200000000000045px;height:11.7px;background:linear-gradient(#5c8ad0 0%,#3c6cc0 48%,#1a4a9c 52%,#1e4e9e 100%)"></div><svg style="position:absolute;left:596.1px;top:110.94999999999999px" width="5" height="3.5"><path d="M0 0h5l-2.5 3z" fill="#fff"/></svg>
<div style="position:absolute;left:608.5px;top:109.2px;font-size:7.4px;line-height:1;color:#f0f0f0;font-weight:400;white-space:nowrap;">Assay</div>
<div style="position:absolute;left:632px;top:106.3px;width:60.5px;height:11.7px;background:#fff;border:1px solid #b4c8e0;box-sizing:border-box"></div><div style="position:absolute;left:634px;top:109.3px;font-size:7.5px;line-height:1;color:#111;font-weight:400;white-space:nowrap;">Target1</div><div style="position:absolute;left:680px;top:106.3px;width:12.5px;height:11.7px;background:linear-gradient(#5c8ad0 0%,#3c6cc0 48%,#1a4a9c 52%,#1e4e9e 100%)"></div><svg style="position:absolute;left:683.75px;top:110.94999999999999px" width="5" height="3.5"><path d="M0 0h5l-2.5 3z" fill="#fff"/></svg>
<div style="position:absolute;left:699px;top:109.2px;font-size:7.4px;line-height:1;color:#f8f8f8;font-weight:400;white-space:nowrap;">Threshold</div>
<div style="position:absolute;left:735px;top:108px;width:8.5px;height:8.5px;background:#c8c8c8;border:1px solid #d8d8d8;box-sizing:border-box"></div>
<div style="position:absolute;left:747px;top:109.2px;font-size:7.4px;line-height:1;color:#d2d2d2;font-weight:400;white-space:nowrap;">Auto</div>
<div style="position:absolute;left:765.4px;top:106px;width:26.6px;height:12.4px;background:#f4f4f4"></div>
<div style="position:absolute;left:792px;top:106px;width:8px;height:12.4px;background:#fafafa"></div>
<svg style="position:absolute;left:793px;top:107px" width="6" height="11"><path d="M0.8 4.2l2.2-2.8 2.2 2.8z M0.8 6.8l2.2 2.8 2.2-2.8z" fill="#111"/></svg>
<div style="position:absolute;left:806px;top:108px;width:8.5px;height:8.5px;background:#c8c8c8;border:1px solid #d8d8d8;box-sizing:border-box"></div>
<div style="position:absolute;left:817px;top:109.2px;font-size:7.4px;line-height:1;color:#d2d2d2;font-weight:400;white-space:nowrap;">Auto Baseline</div>
<div style="position:absolute;left:523.8px;top:125.5px;width:413px;height:304px;background:#aaa9a7;border-radius:3px 3px 0 0"></div>
<div style="position:absolute;left:523.8px;top:125.5px;width:413px;height:12.4px;background:linear-gradient(#4d6b9c,#2f4d80);border-radius:3px 3px 0 0"></div>
<div style="position:absolute;left:933.8px;top:140px;width:3px;height:290px;background:linear-gradient(90deg,#9aa0a6,#8c9298)"></div>
<div style="position:absolute;left:524px;top:423.6px;width:412.8px;height:6.1px;background:linear-gradient(#a4a6a8,#9a9ea2)"></div>
<div style="position:absolute;left:528px;top:128.6px;width:49px;height:10px;background:#aaa9a7;border-radius:2px 2px 0 0"></div>
<div style="position:absolute;left:532.5px;top:129.6px;font-size:7.4px;line-height:1;color:#f4f4f4;font-weight:400;white-space:nowrap;">Plate Setup</div>
<div style="position:absolute;left:583.4px;top:128.6px;width:44.3px;height:9.6px;background:linear-gradient(#fafafa,#dcdcdc);border-radius:2px 2px 0 0"></div>
<div style="position:absolute;left:588.5px;top:129.6px;font-size:7.4px;line-height:1;color:#111;font-weight:400;white-space:nowrap;">Well Table</div>
<div style="position:absolute;left:871.5px;top:127.4px;width:59.5px;height:9.2px;background:linear-gradient(#fcfcfc,#dedede);border-radius:2.5px;box-shadow:0 0 0 0.6px #b8b8b8"></div>
<div style="position:absolute;left:874px;top:128.6px;font-size:7.4px;line-height:1;color:#111;font-weight:400;white-space:nowrap;">Result Summary</div>
<div style="position:absolute;left:679.4px;top:143.2px;width:28.6px;height:8.1px;background:linear-gradient(#4a6294,#2c4274);border-radius:3px;box-shadow:0 0 0 0.8px #8d9db8"><div style="font-size:7.4px;color:#eef;line-height:8.1px;text-align:center;white-space:nowrap">Zoom In</div></div>
<div style="position:absolute;left:713px;top:143.2px;width:35px;height:8.1px;background:linear-gradient(#4a6294,#2c4274);border-radius:3px;box-shadow:0 0 0 0.8px #8d9db8"><div style="font-size:7.4px;color:#eef;line-height:8.1px;text-align:center;white-space:nowrap">Zoom Out</div></div>
<div style="position:absolute;left:753px;top:143.2px;width:29px;height:8.1px;background:linear-gradient(#4a6294,#2c4274);border-radius:3px;box-shadow:0 0 0 0.8px #8d9db8"><div style="font-size:7.4px;color:#eef;line-height:8.1px;text-align:center;white-space:nowrap">Reset</div></div>
<div style="position:absolute;left:527.3px;top:153.6px;width:406.10000000000014px;height:269.79999999999995px;background:#fff"></div>
<div style="position:absolute;left:527.3px;top:153.6px;width:406.10000000000014px;height:11.0px;background:linear-gradient(#4f6d9e,#2c4a7c)"></div>
<div style="position:absolute;left:535.0px;top:156.6px;font-size:7.6px;line-height:1;color:#e4e8f2;font-weight:700;white-space:nowrap;width:33.2px;text-align:center">1</div>
<div style="position:absolute;left:568.2px;top:156.6px;font-size:7.6px;line-height:1;color:#e4e8f2;font-weight:700;white-space:nowrap;width:33.2px;text-align:center">2</div>
<div style="position:absolute;left:568.2px;top:153.6px;width:0.8px;height:11.0px;background:#5f78a4"></div>
<div style="position:absolute;left:601.4px;top:156.6px;font-size:7.6px;line-height:1;color:#e4e8f2;font-weight:700;white-space:nowrap;width:33.2px;text-align:center">3</div>
<div style="position:absolute;left:601.4px;top:153.6px;width:0.8px;height:11.0px;background:#5f78a4"></div>
<div style="position:absolute;left:634.6px;top:156.6px;font-size:7.6px;line-height:1;color:#e4e8f2;font-weight:700;white-space:nowrap;width:33.2px;text-align:center">4</div>
<div style="position:absolute;left:634.6px;top:153.6px;width:0.8px;height:11.0px;background:#5f78a4"></div>
<div style="position:absolute;left:667.8px;top:156.6px;font-size:7.6px;line-height:1;color:#e4e8f2;font-weight:700;white-space:nowrap;width:33.2px;text-align:center">5</div>
<div style="position:absolute;left:667.8px;top:153.6px;width:0.8px;height:11.0px;background:#5f78a4"></div>
<div style="position:absolute;left:701.0px;top:156.6px;font-size:7.6px;line-height:1;color:#e4e8f2;font-weight:700;white-space:nowrap;width:33.2px;text-align:center">6</div>
<div style="position:absolute;left:701.0px;top:153.6px;width:0.8px;height:11.0px;background:#5f78a4"></div>
<div style="position:absolute;left:734.2px;top:156.6px;font-size:7.6px;line-height:1;color:#e4e8f2;font-weight:700;white-space:nowrap;width:33.2px;text-align:center">7</div>
<div style="position:absolute;left:734.2px;top:153.6px;width:0.8px;height:11.0px;background:#5f78a4"></div>
<div style="position:absolute;left:767.4000000000001px;top:156.6px;font-size:7.6px;line-height:1;color:#e4e8f2;font-weight:700;white-space:nowrap;width:33.2px;text-align:center">8</div>
<div style="position:absolute;left:767.4000000000001px;top:153.6px;width:0.8px;height:11.0px;background:#5f78a4"></div>
<div style="position:absolute;left:800.6px;top:156.6px;font-size:7.6px;line-height:1;color:#e4e8f2;font-weight:700;white-space:nowrap;width:33.2px;text-align:center">9</div>
<div style="position:absolute;left:800.6px;top:153.6px;width:0.8px;height:11.0px;background:#5f78a4"></div>
<div style="position:absolute;left:833.8px;top:156.6px;font-size:7.6px;line-height:1;color:#e4e8f2;font-weight:700;white-space:nowrap;width:33.2px;text-align:center">10</div>
<div style="position:absolute;left:833.8px;top:153.6px;width:0.8px;height:11.0px;background:#5f78a4"></div>
<div style="position:absolute;left:867.0px;top:156.6px;font-size:7.6px;line-height:1;color:#e4e8f2;font-weight:700;white-space:nowrap;width:33.2px;text-align:center">11</div>
<div style="position:absolute;left:867.0px;top:153.6px;width:0.8px;height:11.0px;background:#5f78a4"></div>
<div style="position:absolute;left:900.2px;top:156.6px;font-size:7.6px;line-height:1;color:#e4e8f2;font-weight:700;white-space:nowrap;width:33.2px;text-align:center">12</div>
<div style="position:absolute;left:900.2px;top:153.6px;width:0.8px;height:11.0px;background:#5f78a4"></div>
<div style="position:absolute;left:527.3px;top:164.6px;width:7.7px;height:32.35px;background:linear-gradient(90deg,#46649a,#2e4c80)"></div>
<div style="position:absolute;left:527.3px;top:164.6px;width:7.7px;height:0.8px;background:#8ca0c4"></div>
<div style="position:absolute;left:527.5999999999999px;top:177.775px;font-size:7.4px;line-height:1;color:#e4e8f2;font-weight:700;white-space:nowrap;width:7.7px;text-align:center">A</div>
<div style="position:absolute;left:527.3px;top:196.95px;width:7.7px;height:32.35px;background:linear-gradient(90deg,#46649a,#2e4c80)"></div>
<div style="position:absolute;left:527.3px;top:196.95px;width:7.7px;height:0.8px;background:#8ca0c4"></div>
<div style="position:absolute;left:527.5999999999999px;top:210.125px;font-size:7.4px;line-height:1;color:#e4e8f2;font-weight:700;white-space:nowrap;width:7.7px;text-align:center">B</div>
<div style="position:absolute;left:527.3px;top:229.3px;width:7.7px;height:32.35px;background:linear-gradient(90deg,#46649a,#2e4c80)"></div>
<div style="position:absolute;left:527.3px;top:229.3px;width:7.7px;height:0.8px;background:#8ca0c4"></div>
<div style="position:absolute;left:527.5999999999999px;top:242.47500000000002px;font-size:7.4px;line-height:1;color:#e4e8f2;font-weight:700;white-space:nowrap;width:7.7px;text-align:center">C</div>
<div style="position:absolute;left:527.3px;top:261.65px;width:7.7px;height:32.35px;background:linear-gradient(90deg,#46649a,#2e4c80)"></div>
<div style="position:absolute;left:527.3px;top:261.65px;width:7.7px;height:0.8px;background:#8ca0c4"></div>
<div style="position:absolute;left:527.5999999999999px;top:274.825px;font-size:7.4px;line-height:1;color:#e4e8f2;font-weight:700;white-space:nowrap;width:7.7px;text-align:center">D</div>
<div style="position:absolute;left:527.3px;top:294.0px;width:7.7px;height:32.35px;background:linear-gradient(90deg,#46649a,#2e4c80)"></div>
<div style="position:absolute;left:527.3px;top:294.0px;width:7.7px;height:0.8px;background:#8ca0c4"></div>
<div style="position:absolute;left:527.5999999999999px;top:307.175px;font-size:7.4px;line-height:1;color:#e4e8f2;font-weight:700;white-space:nowrap;width:7.7px;text-align:center">E</div>
<div style="position:absolute;left:527.3px;top:326.35px;width:7.7px;height:32.35px;background:linear-gradient(90deg,#46649a,#2e4c80)"></div>
<div style="position:absolute;left:527.3px;top:326.35px;width:7.7px;height:0.8px;background:#8ca0c4"></div>
<div style="position:absolute;left:527.5999999999999px;top:339.52500000000003px;font-size:7.4px;line-height:1;color:#e4e8f2;font-weight:700;white-space:nowrap;width:7.7px;text-align:center">F</div>
<div style="position:absolute;left:527.3px;top:358.70000000000005px;width:7.7px;height:32.35px;background:linear-gradient(90deg,#46649a,#2e4c80)"></div>
<div style="position:absolute;left:527.3px;top:358.70000000000005px;width:7.7px;height:0.8px;background:#8ca0c4"></div>
<div style="position:absolute;left:527.5999999999999px;top:371.87500000000006px;font-size:7.4px;line-height:1;color:#e4e8f2;font-weight:700;white-space:nowrap;width:7.7px;text-align:center">G</div>
<div style="position:absolute;left:527.3px;top:391.05px;width:7.7px;height:32.35px;background:linear-gradient(90deg,#46649a,#2e4c80)"></div>
<div style="position:absolute;left:527.3px;top:391.05px;width:7.7px;height:0.8px;background:#8ca0c4"></div>
<div style="position:absolute;left:527.5999999999999px;top:404.225px;font-size:7.4px;line-height:1;color:#e4e8f2;font-weight:700;white-space:nowrap;width:7.7px;text-align:center">H</div>
<div style="position:absolute;left:536.0px;top:165.6px;width:31.200000000000003px;height:30.35px;overflow:hidden"><div style="position:absolute;left:3.5px;top:3.5px;width:24.200000000000003px;height:23.35px;background:radial-gradient(closest-side,#d9d9d9 0%,#e3e3e3 50%,#ebebeb 100%);border-radius:6px;filter:blur(2.8px)"></div></div>
<div style="position:absolute;left:569.2px;top:165.6px;width:31.200000000000003px;height:30.35px;overflow:hidden"><div style="position:absolute;left:3.5px;top:3.5px;width:24.200000000000003px;height:23.35px;background:radial-gradient(closest-side,#d9d9d9 0%,#e3e3e3 50%,#ebebeb 100%);border-radius:6px;filter:blur(2.8px)"></div></div>
<div style="position:absolute;left:601.4px;top:164.6px;width:33.2px;height:32.35px;overflow:hidden"><div style="position:absolute;left:3px;top:3px;width:27.200000000000003px;height:9.45px;background:radial-gradient(ellipse at 50% 62%,#a0ecf0 0%,#a0ecf0 22%,rgba(255,255,255,0) 72%)"></div><div style="position:absolute;left:0.6px;top:11.45px;width:31.800000000000004px;height:8.05px;background:#30d430;overflow:hidden"><div style="position:absolute;left:0.3px;top:0.2px;width:8.8px;height:7.7px;background:#3e60c6;border:0.7px solid #2a48a8;box-sizing:border-box;color:#e8f2ff;font-size:7px;font-weight:700;line-height:6.6px;text-align:center">U</div><div style="position:absolute;left:12px;top:0;font-size:7.6px;line-height:8.05px;color:#effff0;white-space:nowrap">Target</div></div><div style="position:absolute;left:0.6px;top:19.5px;width:31.800000000000004px;height:8.05px;background:#ff00ff;overflow:hidden"><div style="position:absolute;left:0.3px;top:0.2px;width:8.8px;height:7.7px;background:#3e60c6;border:0.7px solid #2a48a8;box-sizing:border-box;color:#e8f2ff;font-size:7px;font-weight:700;line-height:6.6px;text-align:center">U</div><div style="position:absolute;left:12px;top:0;font-size:7.6px;line-height:8.05px;color:#62007a;white-space:nowrap">Target</div></div><div style="position:absolute;left:-6px;top:1.2px;width:45.2px;text-align:center;font-size:6.9px;line-height:7px;color:#222;white-space:nowrap">C1C.1</div></div>
<div style="position:absolute;left:634.6px;top:164.6px;width:33.2px;height:32.35px;overflow:hidden"><div style="position:absolute;left:0.6px;top:7.424999999999999px;width:31.800000000000004px;height:8.05px;background:#30d430;overflow:hidden"><div style="position:absolute;left:0.3px;top:0.2px;width:8.8px;height:7.7px;background:#3e60c6;border:0.7px solid #2a48a8;box-sizing:border-box;color:#e8f2ff;font-size:7px;font-weight:700;line-height:6.6px;text-align:center">U</div><div style="position:absolute;left:12px;top:0;font-size:7.6px;line-height:8.05px;color:#effff0;white-space:nowrap">Target</div></div><div style="position:absolute;left:0.6px;top:15.475px;width:31.800000000000004px;height:8.05px;background:#ff00ff;overflow:hidden"><div style="position:absolute;left:0.3px;top:0.2px;width:8.8px;height:7.7px;background:#3e60c6;border:0.7px solid #2a48a8;box-sizing:border-box;color:#e8f2ff;font-size:7px;font-weight:700;line-height:6.6px;text-align:center">U</div><div style="position:absolute;left:12px;top:0;font-size:7.6px;line-height:8.05px;color:#62007a;white-space:nowrap">Target</div></div><div style="position:absolute;left:0.6px;top:23.525px;width:31.800000000000004px;height:8.05px;background:#ff00ff;overflow:hidden"><div style="position:absolute;left:1.5px;top:0;font-size:7.6px;line-height:8.05px;color:#62007a;white-space:nowrap">CT:29.88</div></div><div style="position:absolute;left:-6px;top:1.2px;width:45.2px;text-align:center;font-size:6.9px;line-height:7px;color:#222;white-space:nowrap">C6C.2</div></div>
<div style="position:absolute;left:667.8px;top:164.6px;width:33.2px;height:32.35px;overflow:hidden"><div style="position:absolute;left:0.6px;top:7.424999999999999px;width:31.800000000000004px;height:8.05px;background:#30d430;overflow:hidden"><div style="position:absolute;left:0.3px;top:0.2px;width:8.8px;height:7.7px;background:#3e60c6;border:0.7px solid #2a48a8;box-sizing:border-box;color:#e8f2ff;font-size:7px;font-weight:700;line-height:6.6px;text-align:center">U</div><div style="position:absolute;left:12px;top:0;font-size:7.6px;line-height:8.05px;color:#effff0;white-space:nowrap">Target</div></div><div style="position:absolute;left:0.6px;top:15.475px;width:31.800000000000004px;height:8.05px;background:#ff00ff;overflow:hidden"><div style="position:absolute;left:0.3px;top:0.2px;width:8.8px;height:7.7px;background:#3e60c6;border:0.7px solid #2a48a8;box-sizing:border-box;color:#e8f2ff;font-size:7px;font-weight:700;line-height:6.6px;text-align:center">U</div><div style="position:absolute;left:12px;top:0;font-size:7.6px;line-height:8.05px;color:#62007a;white-space:nowrap">Target</div></div><div style="position:absolute;left:0.6px;top:23.525px;width:31.800000000000004px;height:8.05px;background:#ff00ff;overflow:hidden"><div style="position:absolute;left:1.5px;top:0;font-size:7.6px;line-height:8.05px;color:#62007a;white-space:nowrap">CT:30.46</div></div><div style="position:absolute;left:-6px;top:1.2px;width:45.2px;text-align:center;font-size:6.9px;line-height:7px;color:#222;white-space:nowrap">C42</div></div>
<div style="position:absolute;left:701.0px;top:164.6px;width:33.2px;height:32.35px;overflow:hidden"><div style="position:absolute;left:3px;top:3px;width:27.200000000000003px;height:9.45px;background:radial-gradient(ellipse at 50% 62%,#eca898 0%,#eca898 22%,rgba(255,255,255,0) 72%)"></div><div style="position:absolute;left:0.6px;top:11.45px;width:31.800000000000004px;height:8.05px;background:#30d430;overflow:hidden"><div style="position:absolute;left:0.3px;top:0.2px;width:8.8px;height:7.7px;background:#3e60c6;border:0.7px solid #2a48a8;box-sizing:border-box;color:#e8f2ff;font-size:7px;font-weight:700;line-height:6.6px;text-align:center">U</div><div style="position:absolute;left:12px;top:0;font-size:7.6px;line-height:8.05px;color:#effff0;white-space:nowrap">Target</div></div><div style="position:absolute;left:0.6px;top:19.5px;width:31.800000000000004px;height:8.05px;background:#ff00ff;overflow:hidden"><div style="position:absolute;left:0.3px;top:0.2px;width:8.8px;height:7.7px;background:#3e60c6;border:0.7px solid #2a48a8;box-sizing:border-box;color:#e8f2ff;font-size:7px;font-weight:700;line-height:6.6px;text-align:center">U</div><div style="position:absolute;left:12px;top:0;font-size:7.6px;line-height:8.05px;color:#62007a;white-space:nowrap">Target</div></div><div style="position:absolute;left:-6px;top:1.2px;width:45.2px;text-align:center;font-size:6.9px;line-height:7px;color:#222;white-space:nowrap">B3.1</div></div>
<div style="position:absolute;left:734.2px;top:164.6px;width:33.2px;height:32.35px;overflow:hidden"><div style="position:absolute;left:0.6px;top:7.424999999999999px;width:31.800000000000004px;height:8.05px;background:#30d430;overflow:hidden"><div style="position:absolute;left:0.3px;top:0.2px;width:8.8px;height:7.7px;background:#3e60c6;border:0.7px solid #2a48a8;box-sizing:border-box;color:#e8f2ff;font-size:7px;font-weight:700;line-height:6.6px;text-align:center">U</div><div style="position:absolute;left:12px;top:0;font-size:7.6px;line-height:8.05px;color:#effff0;white-space:nowrap">Target</div></div><div style="position:absolute;left:0.6px;top:15.475px;width:31.800000000000004px;height:8.05px;background:#ff00ff;overflow:hidden"><div style="position:absolute;left:0.3px;top:0.2px;width:8.8px;height:7.7px;background:#3e60c6;border:0.7px solid #2a48a8;box-sizing:border-box;color:#e8f2ff;font-size:7px;font-weight:700;line-height:6.6px;text-align:center">U</div><div style="position:absolute;left:12px;top:0;font-size:7.6px;line-height:8.05px;color:#62007a;white-space:nowrap">Target</div></div><div style="position:absolute;left:0.6px;top:23.525px;width:31.800000000000004px;height:8.05px;background:#ff00ff;overflow:hidden"><div style="position:absolute;left:1.5px;top:0;font-size:7.6px;line-height:8.05px;color:#62007a;white-space:nowrap">CT:30.04</div></div><div style="position:absolute;left:-6px;top:1.2px;width:45.2px;text-align:center;font-size:6.9px;line-height:7px;color:#222;white-space:nowrap">B10.1</div></div>
<div style="position:absolute;left:767.4000000000001px;top:164.6px;width:33.2px;height:32.35px;overflow:hidden"><div style="position:absolute;left:3px;top:3px;width:27.200000000000003px;height:9.45px;background:radial-gradient(ellipse at 50% 62%,#c4c4c4 0%,#c4c4c4 22%,rgba(255,255,255,0) 72%)"></div><div style="position:absolute;left:0.6px;top:11.45px;width:31.800000000000004px;height:8.05px;background:#30d430;overflow:hidden"><div style="position:absolute;left:0.3px;top:0.2px;width:8.8px;height:7.7px;background:#3e60c6;border:0.7px solid #2a48a8;box-sizing:border-box;color:#e8f2ff;font-size:7px;font-weight:700;line-height:6.6px;text-align:center">U</div><div style="position:absolute;left:12px;top:0;font-size:7.6px;line-height:8.05px;color:#effff0;white-space:nowrap">Target</div></div><div style="position:absolute;left:0.6px;top:19.5px;width:31.800000000000004px;height:8.05px;background:#ff00ff;overflow:hidden"><div style="position:absolute;left:0.3px;top:0.2px;width:8.8px;height:7.7px;background:#3e60c6;border:0.7px solid #2a48a8;box-sizing:border-box;color:#e8f2ff;font-size:7px;font-weight:700;line-height:6.6px;text-align:center">U</div><div style="position:absolute;left:12px;top:0;font-size:7.6px;line-height:8.05px;color:#62007a;white-space:nowrap">Target</div></div><div style="position:absolute;left:-6px;top:1.2px;width:45.2px;text-align:center;font-size:6.9px;line-height:7px;color:#222;white-space:nowrap">B24.1</div></div>
<div style="position:absolute;left:800.6px;top:164.6px;width:33.2px;height:32.35px;overflow:hidden"><div style="position:absolute;left:0.6px;top:7.424999999999999px;width:31.800000000000004px;height:8.05px;background:#30d430;overflow:hidden"><div style="position:absolute;left:0.3px;top:0.2px;width:8.8px;height:7.7px;background:#3e60c6;border:0.7px solid #2a48a8;box-sizing:border-box;color:#e8f2ff;font-size:7px;font-weight:700;line-height:6.6px;text-align:center">U</div><div style="position:absolute;left:12px;top:0;font-size:7.6px;line-height:8.05px;color:#effff0;white-space:nowrap">Target</div></div><div style="position:absolute;left:0.6px;top:15.475px;width:31.800000000000004px;height:8.05px;background:#ff00ff;overflow:hidden"><div style="position:absolute;left:0.3px;top:0.2px;width:8.8px;height:7.7px;background:#3e60c6;border:0.7px solid #2a48a8;box-sizing:border-box;color:#e8f2ff;font-size:7px;font-weight:700;line-height:6.6px;text-align:center">U</div><div style="position:absolute;left:12px;top:0;font-size:7.6px;line-height:8.05px;color:#62007a;white-space:nowrap">Target</div></div><div style="position:absolute;left:0.6px;top:23.525px;width:31.800000000000004px;height:8.05px;background:#ff00ff;overflow:hidden"><div style="position:absolute;left:1.5px;top:0;font-size:7.6px;line-height:8.05px;color:#62007a;white-space:nowrap">CT:30.32</div></div><div style="position:absolute;left:-6px;top:1.2px;width:45.2px;text-align:center;font-size:6.9px;line-height:7px;color:#222;white-space:nowrap">B1.2</div></div>
<div style="position:absolute;left:833.8px;top:164.6px;width:33.2px;height:32.35px;overflow:hidden"><div style="position:absolute;left:0.6px;top:7.424999999999999px;width:31.800000000000004px;height:8.05px;background:#30d430;overflow:hidden"><div style="position:absolute;left:0.3px;top:0.2px;width:8.8px;height:7.7px;background:#3e60c6;border:0.7px solid #2a48a8;box-sizing:border-box;color:#e8f2ff;font-size:7px;font-weight:700;line-height:6.6px;text-align:center">U</div><div style="position:absolute;left:12px;top:0;font-size:7.6px;line-height:8.05px;color:#effff0;white-space:nowrap">Target</div></div><div style="position:absolute;left:0.6px;top:15.475px;width:31.800000000000004px;height:8.05px;background:#ff00ff;overflow:hidden"><div style="position:absolute;left:0.3px;top:0.2px;width:8.8px;height:7.7px;background:#3e60c6;border:0.7px solid #2a48a8;box-sizing:border-box;color:#e8f2ff;font-size:7px;font-weight:700;line-height:6.6px;text-align:center">U</div><div style="position:absolute;left:12px;top:0;font-size:7.6px;line-height:8.05px;color:#62007a;white-space:nowrap">Target</div></div><div style="position:absolute;left:0.6px;top:23.525px;width:31.800000000000004px;height:8.05px;background:#ff00ff;overflow:hidden"><div style="position:absolute;left:1.5px;top:0;font-size:7.6px;line-height:8.05px;color:#62007a;white-space:nowrap">CT:29.77</div></div><div style="position:absolute;left:-6px;top:1.2px;width:45.2px;text-align:center;font-size:6.9px;line-height:7px;color:#222;white-space:nowrap">B12.2</div></div>
<div style="position:absolute;left:868.0px;top:165.6px;width:31.200000000000003px;height:30.35px;overflow:hidden"><div style="position:absolute;left:3.5px;top:3.5px;width:24.200000000000003px;height:23.35px;background:radial-gradient(closest-side,#d9d9d9 0%,#e3e3e3 50%,#ebebeb 100%);border-radius:6px;filter:blur(2.8px)"></div></div>
<div style="position:absolute;left:901.2px;top:165.6px;width:31.200000000000003px;height:30.35px;overflow:hidden"><div style="position:absolute;left:3.5px;top:3.5px;width:24.200000000000003px;height:23.35px;background:radial-gradient(closest-side,#d9d9d9 0%,#e3e3e3 50%,#ebebeb 100%);border-radius:6px;filter:blur(2.8px)"></div></div>
<div style="position:absolute;left:536.0px;top:197.95px;width:31.200000000000003px;height:30.35px;overflow:hidden"><div style="position:absolute;left:3.5px;top:3.5px;width:24.200000000000003px;height:23.35px;background:radial-gradient(closest-side,#d9d9d9 0%,#e3e3e3 50%,#ebebeb 100%);border-radius:6px;filter:blur(2.8px)"></div></div>
<div style="position:absolute;left:569.2px;top:197.95px;width:31.200000000000003px;height:30.35px;overflow:hidden"><div style="position:absolute;left:3.5px;top:3.5px;width:24.200000000000003px;height:23.35px;background:radial-gradient(closest-side,#d9d9d9 0%,#e3e3e3 50%,#ebebeb 100%);border-radius:6px;filter:blur(2.8px)"></div></div>
<div style="position:absolute;left:601.4px;top:196.95px;width:33.2px;height:32.35px;overflow:hidden"><div style="position:absolute;left:0.6px;top:7.424999999999999px;width:31.800000000000004px;height:8.05px;background:#30d430;overflow:hidden"><div style="position:absolute;left:0.3px;top:0.2px;width:8.8px;height:7.7px;background:#3e60c6;border:0.7px solid #2a48a8;box-sizing:border-box;color:#e8f2ff;font-size:7px;font-weight:700;line-height:6.6px;text-align:center">U</div><div style="position:absolute;left:12px;top:0;font-size:7.6px;line-height:8.05px;color:#effff0;white-space:nowrap">Target</div></div><div style="position:absolute;left:0.6px;top:15.475px;width:31.800000000000004px;height:8.05px;background:#ff00ff;overflow:hidden"><div style="position:absolute;left:0.3px;top:0.2px;width:8.8px;height:7.7px;background:#3e60c6;border:0.7px solid #2a48a8;box-sizing:border-box;color:#e8f2ff;font-size:7px;font-weight:700;line-height:6.6px;text-align:center">U</div><div style="position:absolute;left:12px;top:0;font-size:7.6px;line-height:8.05px;color:#62007a;white-space:nowrap">Target</div></div><div style="position:absolute;left:0.6px;top:23.525px;width:31.800000000000004px;height:8.05px;background:#ff00ff;overflow:hidden"><div style="position:absolute;left:1.5px;top:0;font-size:7.6px;line-height:8.05px;color:#62007a;white-space:nowrap">CT:29.88</div></div><div style="position:absolute;left:-6px;top:1.2px;width:45.2px;text-align:center;font-size:6.9px;line-height:7px;color:#222;white-space:nowrap">C1C.1</div></div>
<div style="position:absolute;left:634.6px;top:196.95px;width:33.2px;height:32.35px;overflow:hidden"><div style="position:absolute;left:3px;top:3px;width:27.200000000000003px;height:9.45px;background:radial-gradient(ellipse at 50% 62%,#f0b888 0%,#f0b888 22%,rgba(255,255,255,0) 72%)"></div><div style="position:absolute;left:0.6px;top:11.45px;width:31.800000000000004px;height:8.05px;background:#30d430;overflow:hidden"><div style="position:absolute;left:0.3px;top:0.2px;width:8.8px;height:7.7px;background:#3e60c6;border:0.7px solid #2a48a8;box-sizing:border-box;color:#e8f2ff;font-size:7px;font-weight:700;line-height:6.6px;text-align:center">U</div><div style="position:absolute;left:12px;top:0;font-size:7.6px;line-height:8.05px;color:#effff0;white-space:nowrap">Target</div></div><div style="position:absolute;left:0.6px;top:19.5px;width:31.800000000000004px;height:8.05px;background:#ff00ff;overflow:hidden"><div style="position:absolute;left:0.3px;top:0.2px;width:8.8px;height:7.7px;background:#3e60c6;border:0.7px solid #2a48a8;box-sizing:border-box;color:#e8f2ff;font-size:7px;font-weight:700;line-height:6.6px;text-align:center">U</div><div style="position:absolute;left:12px;top:0;font-size:7.6px;line-height:8.05px;color:#62007a;white-space:nowrap">Target</div></div><div style="position:absolute;left:-6px;top:1.2px;width:45.2px;text-align:center;font-size:6.9px;line-height:7px;color:#222;white-space:nowrap">C7C.2</div></div>
<div style="position:absolute;left:667.8px;top:196.95px;width:33.2px;height:32.35px;overflow:hidden"><div style="position:absolute;left:0.6px;top:7.424999999999999px;width:31.800000000000004px;height:8.05px;background:#30d430;overflow:hidden"><div style="position:absolute;left:0.3px;top:0.2px;width:8.8px;height:7.7px;background:#3e60c6;border:0.7px solid #2a48a8;box-sizing:border-box;color:#e8f2ff;font-size:7px;font-weight:700;line-height:6.6px;text-align:center">U</div><div style="position:absolute;left:12px;top:0;font-size:7.6px;line-height:8.05px;color:#effff0;white-space:nowrap">Target</div></div><div style="position:absolute;left:0.6px;top:15.475px;width:31.800000000000004px;height:8.05px;background:#ff00ff;overflow:hidden"><div style="position:absolute;left:0.3px;top:0.2px;width:8.8px;height:7.7px;background:#3e60c6;border:0.7px solid #2a48a8;box-sizing:border-box;color:#e8f2ff;font-size:7px;font-weight:700;line-height:6.6px;text-align:center">U</div><div style="position:absolute;left:12px;top:0;font-size:7.6px;line-height:8.05px;color:#62007a;white-space:nowrap">Target</div></div><div style="position:absolute;left:0.6px;top:23.525px;width:31.800000000000004px;height:8.05px;background:#ff00ff;overflow:hidden"><div style="position:absolute;left:1.5px;top:0;font-size:7.6px;line-height:8.05px;color:#62007a;white-space:nowrap">CT:30.02</div></div><div style="position:absolute;left:-6px;top:1.2px;width:45.2px;text-align:center;font-size:6.9px;line-height:7px;color:#222;white-space:nowrap">C51</div></div>
<div style="position:absolute;left:701.0px;top:196.95px;width:33.2px;height:32.35px;overflow:hidden"><div style="position:absolute;left:0.6px;top:7.424999999999999px;width:31.800000000000004px;height:8.05px;background:#30d430;overflow:hidden"><div style="position:absolute;left:0.3px;top:0.2px;width:8.8px;height:7.7px;background:#3e60c6;border:0.7px solid #2a48a8;box-sizing:border-box;color:#e8f2ff;font-size:7px;font-weight:700;line-height:6.6px;text-align:center">U</div><div style="position:absolute;left:12px;top:0;font-size:7.6px;line-height:8.05px;color:#effff0;white-space:nowrap">Target</div></div><div style="position:absolute;left:0.6px;top:15.475px;width:31.800000000000004px;height:8.05px;background:#30d430;overflow:hidden"><div style="position:absolute;left:1.5px;top:0;font-size:7.6px;line-height:8.05px;color:#effff0;white-space:nowrap">CT:31.89</div></div><div style="position:absolute;left:0.6px;top:23.525px;width:31.800000000000004px;height:8.05px;background:#ff00ff;overflow:hidden"><div style="position:absolute;left:0.3px;top:0.2px;width:8.8px;height:7.7px;background:#3e60c6;border:0.7px solid #2a48a8;box-sizing:border-box;color:#e8f2ff;font-size:7px;font-weight:700;line-height:6.6px;text-align:center">U</div><div style="position:absolute;left:12px;top:0;font-size:7.6px;line-height:8.05px;color:#62007a;white-space:nowrap">Target</div></div><div style="position:absolute;left:-6px;top:1.2px;width:45.2px;text-align:center;font-size:6.9px;line-height:7px;color:#222;white-space:nowrap">B4.1</div></div>
<div style="position:absolute;left:734.2px;top:196.95px;width:33.2px;height:32.35px;overflow:hidden"><div style="position:absolute;left:3px;top:3px;width:27.200000000000003px;height:9.45px;background:radial-gradient(ellipse at 50% 62%,#c4c4c4 0%,#c4c4c4 22%,rgba(255,255,255,0) 72%)"></div><div style="position:absolute;left:0.6px;top:11.45px;width:31.800000000000004px;height:8.05px;background:#30d430;overflow:hidden"><div style="position:absolute;left:0.3px;top:0.2px;width:8.8px;height:7.7px;background:#3e60c6;border:0.7px solid #2a48a8;box-sizing:border-box;color:#e8f2ff;font-size:7px;font-weight:700;line-height:6.6px;text-align:center">U</div><div style="position:absolute;left:12px;top:0;font-size:7.6px;line-height:8.05px;color:#effff0;white-space:nowrap">Target</div></div><div style="position:absolute;left:0.6px;top:19.5px;width:31.800000000000004px;height:8.05px;background:#ff00ff;overflow:hidden"><div style="position:absolute;left:0.3px;top:0.2px;width:8.8px;height:7.7px;background:#3e60c6;border:0.7px solid #2a48a8;box-sizing:border-box;color:#e8f2ff;font-size:7px;font-weight:700;line-height:6.6px;text-align:center">U</div><div style="position:absolute;left:12px;top:0;font-size:7.6px;line-height:8.05px;color:#62007a;white-space:nowrap">Target</div></div><div style="position:absolute;left:-6px;top:1.2px;width:45.2px;text-align:center;font-size:6.9px;line-height:7px;color:#222;white-space:nowrap">B16.1</div></div>
<div style="position:absolute;left:767.4000000000001px;top:196.95px;width:33.2px;height:32.35px;overflow:hidden"><div style="position:absolute;left:3px;top:3px;width:27.200000000000003px;height:9.45px;background:radial-gradient(ellipse at 50% 62%,#b8d0a8 0%,#b8d0a8 22%,rgba(255,255,255,0) 72%)"></div><div style="position:absolute;left:0.6px;top:11.45px;width:31.800000000000004px;height:8.05px;background:#30d430;overflow:hidden"><div style="position:absolute;left:0.3px;top:0.2px;width:8.8px;height:7.7px;background:#3e60c6;border:0.7px solid #2a48a8;box-sizing:border-box;color:#e8f2ff;font-size:7px;font-weight:700;line-height:6.6px;text-align:center">U</div><div style="position:absolute;left:12px;top:0;font-size:7.6px;line-height:8.05px;color:#effff0;white-space:nowrap">Target</div></div><div style="position:absolute;left:0.6px;top:19.5px;width:31.800000000000004px;height:8.05px;background:#ff00ff;overflow:hidden"><div style="position:absolute;left:0.3px;top:0.2px;width:8.8px;height:7.7px;background:#3e60c6;border:0.7px solid #2a48a8;box-sizing:border-box;color:#e8f2ff;font-size:7px;font-weight:700;line-height:6.6px;text-align:center">U</div><div style="position:absolute;left:12px;top:0;font-size:7.6px;line-height:8.05px;color:#62007a;white-space:nowrap">Target</div></div><div style="position:absolute;left:-6px;top:1.2px;width:45.2px;text-align:center;font-size:6.9px;line-height:7px;color:#222;white-space:nowrap">B25.1</div></div>
<div style="position:absolute;left:800.6px;top:196.95px;width:33.2px;height:32.35px;overflow:hidden"><div style="position:absolute;left:0.6px;top:7.424999999999999px;width:31.800000000000004px;height:8.05px;background:#30d430;overflow:hidden"><div style="position:absolute;left:0.3px;top:0.2px;width:8.8px;height:7.7px;background:#3e60c6;border:0.7px solid #2a48a8;box-sizing:border-box;color:#e8f2ff;font-size:7px;font-weight:700;line-height:6.6px;text-align:center">U</div><div style="position:absolute;left:12px;top:0;font-size:7.6px;line-height:8.05px;color:#effff0;white-space:nowrap">Target</div></div><div style="position:absolute;left:0.6px;top:15.475px;width:31.800000000000004px;height:8.05px;background:#ff00ff;overflow:hidden"><div style="position:absolute;left:0.3px;top:0.2px;width:8.8px;height:7.7px;background:#3e60c6;border:0.7px solid #2a48a8;box-sizing:border-box;color:#e8f2ff;font-size:7px;font-weight:700;line-height:6.6px;text-align:center">U</div><div style="position:absolute;left:12px;top:0;font-size:7.6px;line-height:8.05px;color:#62007a;white-space:nowrap">Target</div></div><div style="position:absolute;left:0.6px;top:23.525px;width:31.800000000000004px;height:8.05px;background:#ff00ff;overflow:hidden"><div style="position:absolute;left:1.5px;top:0;font-size:7.6px;line-height:8.05px;color:#62007a;white-space:nowrap">CT:29.88</div></div><div style="position:absolute;left:-6px;top:1.2px;width:45.2px;text-align:center;font-size:6.9px;line-height:7px;color:#222;white-space:nowrap">B5.2</div></div>
<div style="position:absolute;left:833.8px;top:196.95px;width:33.2px;height:32.35px;overflow:hidden"><div style="position:absolute;left:0.6px;top:7.424999999999999px;width:31.800000000000004px;height:8.05px;background:#30d430;overflow:hidden"><div style="position:absolute;left:0.3px;top:0.2px;width:8.8px;height:7.7px;background:#3e60c6;border:0.7px solid #2a48a8;box-sizing:border-box;color:#e8f2ff;font-size:7px;font-weight:700;line-height:6.6px;text-align:center">U</div><div style="position:absolute;left:12px;top:0;font-size:7.6px;line-height:8.05px;color:#effff0;white-space:nowrap">Target</div></div><div style="position:absolute;left:0.6px;top:15.475px;width:31.800000000000004px;height:8.05px;background:#ff00ff;overflow:hidden"><div style="position:absolute;left:0.3px;top:0.2px;width:8.8px;height:7.7px;background:#3e60c6;border:0.7px solid #2a48a8;box-sizing:border-box;color:#e8f2ff;font-size:7px;font-weight:700;line-height:6.6px;text-align:center">U</div><div style="position:absolute;left:12px;top:0;font-size:7.6px;line-height:8.05px;color:#62007a;white-space:nowrap">Target</div></div><div style="position:absolute;left:0.6px;top:23.525px;width:31.800000000000004px;height:8.05px;background:#ff00ff;overflow:hidden"><div style="position:absolute;left:1.5px;top:0;font-size:7.6px;line-height:8.05px;color:#62007a;white-space:nowrap">CT:30.2</div></div><div style="position:absolute;left:-6px;top:1.2px;width:45.2px;text-align:center;font-size:6.9px;line-height:7px;color:#222;white-space:nowrap">(-)</div></div>
<div style="position:absolute;left:868.0px;top:197.95px;width:31.200000000000003px;height:30.35px;overflow:hidden"><div style="position:absolute;left:3.5px;top:3.5px;width:24.200000000000003px;height:23.35px;background:radial-gradient(closest-side,#d9d9d9 0%,#e3e3e3 50%,#ebebeb 100%);border-radius:6px;filter:blur(2.8px)"></div></div>
<div style="position:absolute;left:901.2px;top:197.95px;width:31.200000000000003px;height:30.35px;overflow:hidden"><div style="position:absolute;left:3.5px;top:3.5px;width:24.200000000000003px;height:23.35px;background:radial-gradient(closest-side,#d9d9d9 0%,#e3e3e3 50%,#ebebeb 100%);border-radius:6px;filter:blur(2.8px)"></div></div>
<div style="position:absolute;left:536.0px;top:230.3px;width:31.200000000000003px;height:30.35px;overflow:hidden"><div style="position:absolute;left:3.5px;top:3.5px;width:24.200000000000003px;height:23.35px;background:radial-gradient(closest-side,#d9d9d9 0%,#e3e3e3 50%,#ebebeb 100%);border-radius:6px;filter:blur(2.8px)"></div></div>
<div style="position:absolute;left:569.2px;top:230.3px;width:31.200000000000003px;height:30.35px;overflow:hidden"><div style="position:absolute;left:3.5px;top:3.5px;width:24.200000000000003px;height:23.35px;background:radial-gradient(closest-side,#d9d9d9 0%,#e3e3e3 50%,#ebebeb 100%);border-radius:6px;filter:blur(2.8px)"></div></div>
<div style="position:absolute;left:601.4px;top:229.3px;width:33.2px;height:32.35px;overflow:hidden"><div style="position:absolute;left:0.6px;top:7.424999999999999px;width:31.800000000000004px;height:8.05px;background:#30d430;overflow:hidden"><div style="position:absolute;left:0.3px;top:0.2px;width:8.8px;height:7.7px;background:#3e60c6;border:0.7px solid #2a48a8;box-sizing:border-box;color:#e8f2ff;font-size:7px;font-weight:700;line-height:6.6px;text-align:center">U</div><div style="position:absolute;left:12px;top:0;font-size:7.6px;line-height:8.05px;color:#effff0;white-space:nowrap">Target</div></div><div style="position:absolute;left:0.6px;top:15.475px;width:31.800000000000004px;height:8.05px;background:#ff00ff;overflow:hidden"><div style="position:absolute;left:0.3px;top:0.2px;width:8.8px;height:7.7px;background:#3e60c6;border:0.7px solid #2a48a8;box-sizing:border-box;color:#e8f2ff;font-size:7px;font-weight:700;line-height:6.6px;text-align:center">U</div><div style="position:absolute;left:12px;top:0;font-size:7.6px;line-height:8.05px;color:#62007a;white-space:nowrap">Target</div></div><div style="position:absolute;left:0.6px;top:23.525px;width:31.800000000000004px;height:8.05px;background:#ff00ff;overflow:hidden"><div style="position:absolute;left:1.5px;top:0;font-size:7.6px;line-height:8.05px;color:#62007a;white-space:nowrap">CT:30.61</div></div><div style="position:absolute;left:-6px;top:1.2px;width:45.2px;text-align:center;font-size:6.9px;line-height:7px;color:#222;white-space:nowrap">C2C.1</div></div>
<div style="position:absolute;left:634.6px;top:229.3px;width:33.2px;height:32.35px;overflow:hidden"><div style="position:absolute;left:0.6px;top:7.424999999999999px;width:31.800000000000004px;height:8.05px;background:#30d430;overflow:hidden"><div style="position:absolute;left:0.3px;top:0.2px;width:8.8px;height:7.7px;background:#3e60c6;border:0.7px solid #2a48a8;box-sizing:border-box;color:#e8f2ff;font-size:7px;font-weight:700;line-height:6.6px;text-align:center">U</div><div style="position:absolute;left:12px;top:0;font-size:7.6px;line-height:8.05px;color:#effff0;white-space:nowrap">Target</div></div><div style="position:absolute;left:0.6px;top:15.475px;width:31.800000000000004px;height:8.05px;background:#ff00ff;overflow:hidden"><div style="position:absolute;left:0.3px;top:0.2px;width:8.8px;height:7.7px;background:#3e60c6;border:0.7px solid #2a48a8;box-sizing:border-box;color:#e8f2ff;font-size:7px;font-weight:700;line-height:6.6px;text-align:center">U</div><div style="position:absolute;left:12px;top:0;font-size:7.6px;line-height:8.05px;color:#62007a;white-space:nowrap">Target</div></div><div style="position:absolute;left:0.6px;top:23.525px;width:31.800000000000004px;height:8.05px;background:#ff00ff;overflow:hidden"><div style="position:absolute;left:1.5px;top:0;font-size:7.6px;line-height:8.05px;color:#62007a;white-space:nowrap">CT:29.73</div></div><div style="position:absolute;left:-6px;top:1.2px;width:45.2px;text-align:center;font-size:6.9px;line-height:7px;color:#222;white-space:nowrap">C11</div></div>
<div style="position:absolute;left:667.8px;top:229.3px;width:33.2px;height:32.35px;overflow:hidden"><div style="position:absolute;left:0.6px;top:3.3999999999999986px;width:31.800000000000004px;height:8.05px;background:#30d430;overflow:hidden"><div style="position:absolute;left:0.3px;top:0.2px;width:8.8px;height:7.7px;background:#3e60c6;border:0.7px solid #2a48a8;box-sizing:border-box;color:#e8f2ff;font-size:7px;font-weight:700;line-height:6.6px;text-align:center">U</div><div style="position:absolute;left:12px;top:0;font-size:7.6px;line-height:8.05px;color:#effff0;white-space:nowrap">Target</div></div><div style="position:absolute;left:0.6px;top:11.45px;width:31.800000000000004px;height:8.05px;background:#30d430;overflow:hidden"><div style="position:absolute;left:1.5px;top:0;font-size:7.6px;line-height:8.05px;color:#effff0;white-space:nowrap">CT:35.41</div></div><div style="position:absolute;left:0.6px;top:19.5px;width:31.800000000000004px;height:8.05px;background:#ff00ff;overflow:hidden"><div style="position:absolute;left:0.3px;top:0.2px;width:8.8px;height:7.7px;background:#3e60c6;border:0.7px solid #2a48a8;box-sizing:border-box;color:#e8f2ff;font-size:7px;font-weight:700;line-height:6.6px;text-align:center">U</div><div style="position:absolute;left:12px;top:0;font-size:7.6px;line-height:8.05px;color:#62007a;white-space:nowrap">Target</div></div><div style="position:absolute;left:0.6px;top:27.55px;width:31.800000000000004px;height:8.05px;background:#ff00ff;overflow:hidden"><div style="position:absolute;left:1.5px;top:0;font-size:7.6px;line-height:8.05px;color:#62007a;white-space:nowrap">CT:29.85</div></div><div style="position:absolute;left:0;top:0;width:33.2px;height:6.8px;background:#fff"></div><div style="position:absolute;left:-6px;top:1.2px;width:45.2px;text-align:center;font-size:6.9px;line-height:7px;color:#222;white-space:nowrap">C61</div></div>
<div style="position:absolute;left:701.0px;top:229.3px;width:33.2px;height:32.35px;overflow:hidden"><div style="position:absolute;left:0.6px;top:3.3999999999999986px;width:31.800000000000004px;height:8.05px;background:#30d430;overflow:hidden"><div style="position:absolute;left:0.3px;top:0.2px;width:8.8px;height:7.7px;background:#3e60c6;border:0.7px solid #2a48a8;box-sizing:border-box;color:#e8f2ff;font-size:7px;font-weight:700;line-height:6.6px;text-align:center">U</div><div style="position:absolute;left:12px;top:0;font-size:7.6px;line-height:8.05px;color:#effff0;white-space:nowrap">Target</div></div><div style="position:absolute;left:0.6px;top:11.45px;width:31.800000000000004px;height:8.05px;background:#30d430;overflow:hidden"><div style="position:absolute;left:1.5px;top:0;font-size:7.6px;line-height:8.05px;color:#effff0;white-space:nowrap">CT:32.3</div></div><div style="position:absolute;left:0.6px;top:19.5px;width:31.800000000000004px;height:8.05px;background:#ff00ff;overflow:hidden"><div style="position:absolute;left:0.3px;top:0.2px;width:8.8px;height:7.7px;background:#3e60c6;border:0.7px solid #2a48a8;box-sizing:border-box;color:#e8f2ff;font-size:7px;font-weight:700;line-height:6.6px;text-align:center">U</div><div style="position:absolute;left:12px;top:0;font-size:7.6px;line-height:8.05px;color:#62007a;white-space:nowrap">Target</div></div><div style="position:absolute;left:0.6px;top:27.55px;width:31.800000000000004px;height:8.05px;background:#ff00ff;overflow:hidden"><div style="position:absolute;left:1.5px;top:0;font-size:7.6px;line-height:8.05px;color:#62007a;white-space:nowrap">CT:29.85</div></div><div style="position:absolute;left:0;top:0;width:33.2px;height:6.8px;background:#fff"></div><div style="position:absolute;left:-6px;top:1.2px;width:45.2px;text-align:center;font-size:6.9px;line-height:7px;color:#222;white-space:nowrap">B6.1</div></div>
<div style="position:absolute;left:734.2px;top:229.3px;width:33.2px;height:32.35px;overflow:hidden"><div style="position:absolute;left:3px;top:3px;width:27.200000000000003px;height:9.45px;background:radial-gradient(ellipse at 50% 62%,#a0c4f0 0%,#a0c4f0 22%,rgba(255,255,255,0) 72%)"></div><div style="position:absolute;left:0.6px;top:11.45px;width:31.800000000000004px;height:8.05px;background:#30d430;overflow:hidden"><div style="position:absolute;left:0.3px;top:0.2px;width:8.8px;height:7.7px;background:#3e60c6;border:0.7px solid #2a48a8;box-sizing:border-box;color:#e8f2ff;font-size:7px;font-weight:700;line-height:6.6px;text-align:center">U</div><div style="position:absolute;left:12px;top:0;font-size:7.6px;line-height:8.05px;color:#effff0;white-space:nowrap">Target</div></div><div style="position:absolute;left:0.6px;top:19.5px;width:31.800000000000004px;height:8.05px;background:#ff00ff;overflow:hidden"><div style="position:absolute;left:0.3px;top:0.2px;width:8.8px;height:7.7px;background:#3e60c6;border:0.7px solid #2a48a8;box-sizing:border-box;color:#e8f2ff;font-size:7px;font-weight:700;line-height:6.6px;text-align:center">U</div><div style="position:absolute;left:12px;top:0;font-size:7.6px;line-height:8.05px;color:#62007a;white-space:nowrap">Target</div></div><div style="position:absolute;left:-6px;top:1.2px;width:45.2px;text-align:center;font-size:6.9px;line-height:7px;color:#222;white-space:nowrap">B17.1</div></div>
<div style="position:absolute;left:767.4000000000001px;top:229.3px;width:33.2px;height:32.35px;overflow:hidden"><div style="position:absolute;left:3px;top:3px;width:27.200000000000003px;height:9.45px;background:radial-gradient(ellipse at 50% 62%,#d4f0a0 0%,#d4f0a0 22%,rgba(255,255,255,0) 72%)"></div><div style="position:absolute;left:0.6px;top:11.45px;width:31.800000000000004px;height:8.05px;background:#30d430;overflow:hidden"><div style="position:absolute;left:0.3px;top:0.2px;width:8.8px;height:7.7px;background:#3e60c6;border:0.7px solid #2a48a8;box-sizing:border-box;color:#e8f2ff;font-size:7px;font-weight:700;line-height:6.6px;text-align:center">U</div><div style="position:absolute;left:12px;top:0;font-size:7.6px;line-height:8.05px;color:#effff0;white-space:nowrap">Target</div></div><div style="position:absolute;left:0.6px;top:19.5px;width:31.800000000000004px;height:8.05px;background:#ff00ff;overflow:hidden"><div style="position:absolute;left:0.3px;top:0.2px;width:8.8px;height:7.7px;background:#3e60c6;border:0.7px solid #2a48a8;box-sizing:border-box;color:#e8f2ff;font-size:7px;font-weight:700;line-height:6.6px;text-align:center">U</div><div style="position:absolute;left:12px;top:0;font-size:7.6px;line-height:8.05px;color:#62007a;white-space:nowrap">Target</div></div><div style="position:absolute;left:-6px;top:1.2px;width:45.2px;text-align:center;font-size:6.9px;line-height:7px;color:#222;white-space:nowrap">B26.1</div></div>
<div style="position:absolute;left:800.6px;top:229.3px;width:33.2px;height:32.35px;overflow:hidden"><div style="position:absolute;left:0.6px;top:3.3999999999999986px;width:31.800000000000004px;height:8.05px;background:#30d430;overflow:hidden"><div style="position:absolute;left:0.3px;top:0.2px;width:8.8px;height:7.7px;background:#3e60c6;border:0.7px solid #2a48a8;box-sizing:border-box;color:#e8f2ff;font-size:7px;font-weight:700;line-height:6.6px;text-align:center">U</div><div style="position:absolute;left:12px;top:0;font-size:7.6px;line-height:8.05px;color:#effff0;white-space:nowrap">Target</div></div><div style="position:absolute;left:0.6px;top:11.45px;width:31.800000000000004px;height:8.05px;background:#30d430;overflow:hidden"><div style="position:absolute;left:1.5px;top:0;font-size:7.6px;line-height:8.05px;color:#effff0;white-space:nowrap">CT:35.91</div></div><div style="position:absolute;left:0.6px;top:19.5px;width:31.800000000000004px;height:8.05px;background:#ff00ff;overflow:hidden"><div style="position:absolute;left:0.3px;top:0.2px;width:8.8px;height:7.7px;background:#3e60c6;border:0.7px solid #2a48a8;box-sizing:border-box;color:#e8f2ff;font-size:7px;font-weight:700;line-height:6.6px;text-align:center">U</div><div style="position:absolute;left:12px;top:0;font-size:7.6px;line-height:8.05px;color:#62007a;white-space:nowrap">Target</div></div><div style="position:absolute;left:0.6px;top:27.55px;width:31.800000000000004px;height:8.05px;background:#ff00ff;overflow:hidden"><div style="position:absolute;left:1.5px;top:0;font-size:7.6px;line-height:8.05px;color:#62007a;white-space:nowrap">CT:29.85</div></div><div style="position:absolute;left:0;top:0;width:33.2px;height:6.8px;background:#fff"></div><div style="position:absolute;left:-6px;top:1.2px;width:45.2px;text-align:center;font-size:6.9px;line-height:7px;color:#222;white-space:nowrap">2 (SO 2 o d</div></div>
<div style="position:absolute;left:833.8px;top:229.3px;width:33.2px;height:32.35px;overflow:hidden"><div style="position:absolute;left:3px;top:3px;width:27.200000000000003px;height:5.424999999999999px;background:radial-gradient(ellipse at 50% 62%,#f0b0e4 0%,#f0b0e4 22%,rgba(255,255,255,0) 72%)"></div><div style="position:absolute;left:0.6px;top:7.424999999999999px;width:31.800000000000004px;height:8.05px;background:#30d430;overflow:hidden"><div style="position:absolute;left:0.3px;top:0.2px;width:8.8px;height:7.7px;background:#3e60c6;border:0.7px solid #2a48a8;box-sizing:border-box;color:#e8f2ff;font-size:7px;font-weight:700;line-height:6.6px;text-align:center">U</div><div style="position:absolute;left:12px;top:0;font-size:7.6px;line-height:8.05px;color:#effff0;white-space:nowrap">Target</div></div><div style="position:absolute;left:0.6px;top:15.475px;width:31.800000000000004px;height:8.05px;background:#ff00ff;overflow:hidden"><div style="position:absolute;left:0.3px;top:0.2px;width:8.8px;height:7.7px;background:#3e60c6;border:0.7px solid #2a48a8;box-sizing:border-box;color:#e8f2ff;font-size:7px;font-weight:700;line-height:6.6px;text-align:center">U</div><div style="position:absolute;left:12px;top:0;font-size:7.6px;line-height:8.05px;color:#62007a;white-space:nowrap">Target</div></div><div style="position:absolute;left:0.6px;top:23.525px;width:31.800000000000004px;height:8.05px;background:#ff00ff;overflow:hidden"><div style="position:absolute;left:1.5px;top:0;font-size:7.6px;line-height:8.05px;color:#62007a;white-space:nowrap">CT:30.13</div></div><div style="position:absolute;left:-6px;top:1.2px;width:45.2px;text-align:center;font-size:6.9px;line-height:7px;color:#222;white-space:nowrap">X</div></div>
<div style="position:absolute;left:868.0px;top:230.3px;width:31.200000000000003px;height:30.35px;overflow:hidden"><div style="position:absolute;left:3.5px;top:3.5px;width:24.200000000000003px;height:23.35px;background:radial-gradient(closest-side,#d9d9d9 0%,#e3e3e3 50%,#ebebeb 100%);border-radius:6px;filter:blur(2.8px)"></div></div>
<div style="position:absolute;left:901.2px;top:230.3px;width:31.200000000000003px;height:30.35px;overflow:hidden"><div style="position:absolute;left:3.5px;top:3.5px;width:24.200000000000003px;height:23.35px;background:radial-gradient(closest-side,#d9d9d9 0%,#e3e3e3 50%,#ebebeb 100%);border-radius:6px;filter:blur(2.8px)"></div></div>
<div style="position:absolute;left:536.0px;top:262.65px;width:31.200000000000003px;height:30.35px;overflow:hidden"><div style="position:absolute;left:3.5px;top:3.5px;width:24.200000000000003px;height:23.35px;background:radial-gradient(closest-side,#d9d9d9 0%,#e3e3e3 50%,#ebebeb 100%);border-radius:6px;filter:blur(2.8px)"></div></div>
<div style="position:absolute;left:569.2px;top:262.65px;width:31.200000000000003px;height:30.35px;overflow:hidden"><div style="position:absolute;left:3.5px;top:3.5px;width:24.200000000000003px;height:23.35px;background:radial-gradient(closest-side,#d9d9d9 0%,#e3e3e3 50%,#ebebeb 100%);border-radius:6px;filter:blur(2.8px)"></div></div>
<div style="position:absolute;left:601.4px;top:261.65px;width:33.2px;height:32.35px;overflow:hidden"><div style="position:absolute;left:0.6px;top:7.424999999999999px;width:31.800000000000004px;height:8.05px;background:#30d430;overflow:hidden"><div style="position:absolute;left:0.3px;top:0.2px;width:8.8px;height:7.7px;background:#3e60c6;border:0.7px solid #2a48a8;box-sizing:border-box;color:#e8f2ff;font-size:7px;font-weight:700;line-height:6.6px;text-align:center">U</div><div style="position:absolute;left:12px;top:0;font-size:7.6px;line-height:8.05px;color:#effff0;white-space:nowrap">Target</div></div><div style="position:absolute;left:0.6px;top:15.475px;width:31.800000000000004px;height:8.05px;background:#ff00ff;overflow:hidden"><div style="position:absolute;left:0.3px;top:0.2px;width:8.8px;height:7.7px;background:#3e60c6;border:0.7px solid #2a48a8;box-sizing:border-box;color:#e8f2ff;font-size:7px;font-weight:700;line-height:6.6px;text-align:center">U</div><div style="position:absolute;left:12px;top:0;font-size:7.6px;line-height:8.05px;color:#62007a;white-space:nowrap">Target</div></div><div style="position:absolute;left:0.6px;top:23.525px;width:31.800000000000004px;height:8.05px;background:#ff00ff;overflow:hidden"><div style="position:absolute;left:1.5px;top:0;font-size:7.6px;line-height:8.05px;color:#62007a;white-space:nowrap">CT:30.63</div></div><div style="position:absolute;left:-6px;top:1.2px;width:45.2px;text-align:center;font-size:6.9px;line-height:7px;color:#222;white-space:nowrap">C4C.1</div></div>
<div style="position:absolute;left:634.6px;top:261.65px;width:33.2px;height:32.35px;overflow:hidden"><div style="position:absolute;left:0.6px;top:7.424999999999999px;width:31.800000000000004px;height:8.05px;background:#30d430;overflow:hidden"><div style="position:absolute;left:0.3px;top:0.2px;width:8.8px;height:7.7px;background:#3e60c6;border:0.7px solid #2a48a8;box-sizing:border-box;color:#e8f2ff;font-size:7px;font-weight:700;line-height:6.6px;text-align:center">U</div><div style="position:absolute;left:12px;top:0;font-size:7.6px;line-height:8.05px;color:#effff0;white-space:nowrap">Target</div></div><div style="position:absolute;left:0.6px;top:15.475px;width:31.800000000000004px;height:8.05px;background:#ff00ff;overflow:hidden"><div style="position:absolute;left:0.3px;top:0.2px;width:8.8px;height:7.7px;background:#3e60c6;border:0.7px solid #2a48a8;box-sizing:border-box;color:#e8f2ff;font-size:7px;font-weight:700;line-height:6.6px;text-align:center">U</div><div style="position:absolute;left:12px;top:0;font-size:7.6px;line-height:8.05px;color:#62007a;white-space:nowrap">Target</div></div><div style="position:absolute;left:0.6px;top:23.525px;width:31.800000000000004px;height:8.05px;background:#ff00ff;overflow:hidden"><div style="position:absolute;left:1.5px;top:0;font-size:7.6px;line-height:8.05px;color:#62007a;white-space:nowrap">CT:30.05</div></div><div style="position:absolute;left:-6px;top:1.2px;width:45.2px;text-align:center;font-size:6.9px;line-height:7px;color:#222;white-space:nowrap">C12</div></div>
<div style="position:absolute;left:667.8px;top:261.65px;width:33.2px;height:32.35px;overflow:hidden"><div style="position:absolute;left:0.6px;top:7.424999999999999px;width:31.800000000000004px;height:8.05px;background:#30d430;overflow:hidden"><div style="position:absolute;left:0.3px;top:0.2px;width:8.8px;height:7.7px;background:#3e60c6;border:0.7px solid #2a48a8;box-sizing:border-box;color:#e8f2ff;font-size:7px;font-weight:700;line-height:6.6px;text-align:center">U</div><div style="position:absolute;left:12px;top:0;font-size:7.6px;line-height:8.05px;color:#effff0;white-space:nowrap">Target</div></div><div style="position:absolute;left:0.6px;top:15.475px;width:31.800000000000004px;height:8.05px;background:#ff00ff;overflow:hidden"><div style="position:absolute;left:0.3px;top:0.2px;width:8.8px;height:7.7px;background:#3e60c6;border:0.7px solid #2a48a8;box-sizing:border-box;color:#e8f2ff;font-size:7px;font-weight:700;line-height:6.6px;text-align:center">U</div><div style="position:absolute;left:12px;top:0;font-size:7.6px;line-height:8.05px;color:#62007a;white-space:nowrap">Target</div></div><div style="position:absolute;left:0.6px;top:23.525px;width:31.800000000000004px;height:8.05px;background:#ff00ff;overflow:hidden"><div style="position:absolute;left:1.5px;top:0;font-size:7.6px;line-height:8.05px;color:#62007a;white-space:nowrap">CT:29.8</div></div><div style="position:absolute;left:-6px;top:1.2px;width:45.2px;text-align:center;font-size:6.9px;line-height:7px;color:#222;white-space:nowrap">C62</div></div>
<div style="position:absolute;left:701.0px;top:261.65px;width:33.2px;height:32.35px;overflow:hidden"><div style="position:absolute;left:3px;top:3px;width:27.200000000000003px;height:9.45px;background:radial-gradient(ellipse at 50% 62%,#c4a8f0 0%,#c4a8f0 22%,rgba(255,255,255,0) 72%)"></div><div style="position:absolute;left:0.6px;top:11.45px;width:31.800000000000004px;height:8.05px;background:#30d430;overflow:hidden"><div style="position:absolute;left:0.3px;top:0.2px;width:8.8px;height:7.7px;background:#3e60c6;border:0.7px solid #2a48a8;box-sizing:border-box;color:#e8f2ff;font-size:7px;font-weight:700;line-height:6.6px;text-align:center">U</div><div style="position:absolute;left:12px;top:0;font-size:7.6px;line-height:8.05px;color:#effff0;white-space:nowrap">Target</div></div><div style="position:absolute;left:0.6px;top:19.5px;width:31.800000000000004px;height:8.05px;background:#ff00ff;overflow:hidden"><div style="position:absolute;left:0.3px;top:0.2px;width:8.8px;height:7.7px;background:#3e60c6;border:0.7px solid #2a48a8;box-sizing:border-box;color:#e8f2ff;font-size:7px;font-weight:700;line-height:6.6px;text-align:center">U</div><div style="position:absolute;left:12px;top:0;font-size:7.6px;line-height:8.05px;color:#62007a;white-space:nowrap">Target</div></div><div style="position:absolute;left:-6px;top:1.2px;width:45.2px;text-align:center;font-size:6.9px;line-height:7px;color:#222;white-space:nowrap">B7.1</div></div>
<div style="position:absolute;left:734.2px;top:261.65px;width:33.2px;height:32.35px;overflow:hidden"><div style="position:absolute;left:3px;top:3px;width:27.200000000000003px;height:9.45px;background:radial-gradient(ellipse at 50% 62%,#f0a0a0 0%,#f0a0a0 22%,rgba(255,255,255,0) 72%)"></div><div style="position:absolute;left:0.6px;top:11.45px;width:31.800000000000004px;height:8.05px;background:#30d430;overflow:hidden"><div style="position:absolute;left:0.3px;top:0.2px;width:8.8px;height:7.7px;background:#3e60c6;border:0.7px solid #2a48a8;box-sizing:border-box;color:#e8f2ff;font-size:7px;font-weight:700;line-height:6.6px;text-align:center">U</div><div style="position:absolute;left:12px;top:0;font-size:7.6px;line-height:8.05px;color:#effff0;white-space:nowrap">Target</div></div><div style="position:absolute;left:0.6px;top:19.5px;width:31.800000000000004px;height:8.05px;background:#ff00ff;overflow:hidden"><div style="position:absolute;left:0.3px;top:0.2px;width:8.8px;height:7.7px;background:#3e60c6;border:0.7px solid #2a48a8;box-sizing:border-box;color:#e8f2ff;font-size:7px;font-weight:700;line-height:6.6px;text-align:center">U</div><div style="position:absolute;left:12px;top:0;font-size:7.6px;line-height:8.05px;color:#62007a;white-space:nowrap">Target</div></div><div style="position:absolute;left:-6px;top:1.2px;width:45.2px;text-align:center;font-size:6.9px;line-height:7px;color:#222;white-space:nowrap">B18.1</div></div>
<div style="position:absolute;left:767.4000000000001px;top:261.65px;width:33.2px;height:32.35px;overflow:hidden"><div style="position:absolute;left:0.6px;top:7.424999999999999px;width:31.800000000000004px;height:8.05px;background:#30d430;overflow:hidden"><div style="position:absolute;left:0.3px;top:0.2px;width:8.8px;height:7.7px;background:#3e60c6;border:0.7px solid #2a48a8;box-sizing:border-box;color:#e8f2ff;font-size:7px;font-weight:700;line-height:6.6px;text-align:center">U</div><div style="position:absolute;left:12px;top:0;font-size:7.6px;line-height:8.05px;color:#effff0;white-space:nowrap">Target</div></div><div style="position:absolute;left:0.6px;top:15.475px;width:31.800000000000004px;height:8.05px;background:#ff00ff;overflow:hidden"><div style="position:absolute;left:0.3px;top:0.2px;width:8.8px;height:7.7px;background:#3e60c6;border:0.7px solid #2a48a8;box-sizing:border-box;color:#e8f2ff;font-size:7px;font-weight:700;line-height:6.6px;text-align:center">U</div><div style="position:absolute;left:12px;top:0;font-size:7.6px;line-height:8.05px;color:#62007a;white-space:nowrap">Target</div></div><div style="position:absolute;left:0.6px;top:23.525px;width:31.800000000000004px;height:8.05px;background:#ff00ff;overflow:hidden"><div style="position:absolute;left:1.5px;top:0;font-size:7.6px;line-height:8.05px;color:#62007a;white-space:nowrap">CT:30.73</div></div><div style="position:absolute;left:-6px;top:1.2px;width:45.2px;text-align:center;font-size:6.9px;line-height:7px;color:#222;white-space:nowrap">B27.1</div></div>
<div style="position:absolute;left:800.6px;top:261.65px;width:33.2px;height:32.35px;overflow:hidden"><div style="position:absolute;left:0.6px;top:3.3999999999999986px;width:31.800000000000004px;height:8.05px;background:#30d430;overflow:hidden"><div style="position:absolute;left:0.3px;top:0.2px;width:8.8px;height:7.7px;background:#3e60c6;border:0.7px solid #2a48a8;box-sizing:border-box;color:#e8f2ff;font-size:7px;font-weight:700;line-height:6.6px;text-align:center">U</div><div style="position:absolute;left:12px;top:0;font-size:7.6px;line-height:8.05px;color:#effff0;white-space:nowrap">Target</div></div><div style="position:absolute;left:0.6px;top:11.45px;width:31.800000000000004px;height:8.05px;background:#30d430;overflow:hidden"><div style="position:absolute;left:1.5px;top:0;font-size:7.6px;line-height:8.05px;color:#effff0;white-space:nowrap">CT:33.03</div></div><div style="position:absolute;left:0.6px;top:19.5px;width:31.800000000000004px;height:8.05px;background:#ff00ff;overflow:hidden"><div style="position:absolute;left:0.3px;top:0.2px;width:8.8px;height:7.7px;background:#3e60c6;border:0.7px solid #2a48a8;box-sizing:border-box;color:#e8f2ff;font-size:7px;font-weight:700;line-height:6.6px;text-align:center">U</div><div style="position:absolute;left:12px;top:0;font-size:7.6px;line-height:8.05px;color:#62007a;white-space:nowrap">Target</div></div><div style="position:absolute;left:0.6px;top:27.55px;width:31.800000000000004px;height:8.05px;background:#ff00ff;overflow:hidden"><div style="position:absolute;left:1.5px;top:0;font-size:7.6px;line-height:8.05px;color:#62007a;white-space:nowrap">CT:29.85</div></div><div style="position:absolute;left:0;top:0;width:33.2px;height:6.8px;background:#fff"></div><div style="position:absolute;left:-6px;top:1.2px;width:45.2px;text-align:center;font-size:6.9px;line-height:7px;color:#222;white-space:nowrap">B6.2</div></div>
<div style="position:absolute;left:834.8px;top:262.65px;width:31.200000000000003px;height:30.35px;overflow:hidden"><div style="position:absolute;left:3.5px;top:3.5px;width:24.200000000000003px;height:23.35px;background:radial-gradient(closest-side,#d9d9d9 0%,#e3e3e3 50%,#ebebeb 100%);border-radius:6px;filter:blur(2.8px)"></div></div>
<div style="position:absolute;left:868.0px;top:262.65px;width:31.200000000000003px;height:30.35px;overflow:hidden"><div style="position:absolute;left:3.5px;top:3.5px;width:24.200000000000003px;height:23.35px;background:radial-gradient(closest-side,#d9d9d9 0%,#e3e3e3 50%,#ebebeb 100%);border-radius:6px;filter:blur(2.8px)"></div></div>
<div style="position:absolute;left:901.2px;top:262.65px;width:31.200000000000003px;height:30.35px;overflow:hidden"><div style="position:absolute;left:3.5px;top:3.5px;width:24.200000000000003px;height:23.35px;background:radial-gradient(closest-side,#d9d9d9 0%,#e3e3e3 50%,#ebebeb 100%);border-radius:6px;filter:blur(2.8px)"></div></div>
<div style="position:absolute;left:536.0px;top:295.0px;width:31.200000000000003px;height:30.35px;overflow:hidden"><div style="position:absolute;left:3.5px;top:3.5px;width:24.200000000000003px;height:23.35px;background:radial-gradient(closest-side,#d9d9d9 0%,#e3e3e3 50%,#ebebeb 100%);border-radius:6px;filter:blur(2.8px)"></div></div>
<div style="position:absolute;left:569.2px;top:295.0px;width:31.200000000000003px;height:30.35px;overflow:hidden"><div style="position:absolute;left:3.5px;top:3.5px;width:24.200000000000003px;height:23.35px;background:radial-gradient(closest-side,#d9d9d9 0%,#e3e3e3 50%,#ebebeb 100%);border-radius:6px;filter:blur(2.8px)"></div></div>
<div style="position:absolute;left:601.4px;top:294.0px;width:33.2px;height:32.35px;overflow:hidden"><div style="position:absolute;left:0.6px;top:7.424999999999999px;width:31.800000000000004px;height:8.05px;background:#30d430;overflow:hidden"><div style="position:absolute;left:0.3px;top:0.2px;width:8.8px;height:7.7px;background:#3e60c6;border:0.7px solid #2a48a8;box-sizing:border-box;color:#e8f2ff;font-size:7px;font-weight:700;line-height:6.6px;text-align:center">U</div><div style="position:absolute;left:12px;top:0;font-size:7.6px;line-height:8.05px;color:#effff0;white-space:nowrap">Target</div></div><div style="position:absolute;left:0.6px;top:15.475px;width:31.800000000000004px;height:8.05px;background:#ff00ff;overflow:hidden"><div style="position:absolute;left:0.3px;top:0.2px;width:8.8px;height:7.7px;background:#3e60c6;border:0.7px solid #2a48a8;box-sizing:border-box;color:#e8f2ff;font-size:7px;font-weight:700;line-height:6.6px;text-align:center">U</div><div style="position:absolute;left:12px;top:0;font-size:7.6px;line-height:8.05px;color:#62007a;white-space:nowrap">Target</div></div><div style="position:absolute;left:0.6px;top:23.525px;width:31.800000000000004px;height:8.05px;background:#ff00ff;overflow:hidden"><div style="position:absolute;left:1.5px;top:0;font-size:7.6px;line-height:8.05px;color:#62007a;white-space:nowrap">CT:30.07</div></div><div style="position:absolute;left:-6px;top:1.2px;width:45.2px;text-align:center;font-size:6.9px;line-height:7px;color:#222;white-space:nowrap">C7C.1</div></div>
<div style="position:absolute;left:634.6px;top:294.0px;width:33.2px;height:32.35px;overflow:hidden"><div style="position:absolute;left:0.6px;top:3.3999999999999986px;width:31.800000000000004px;height:8.05px;background:#30d430;overflow:hidden"><div style="position:absolute;left:0.3px;top:0.2px;width:8.8px;height:7.7px;background:#3e60c6;border:0.7px solid #2a48a8;box-sizing:border-box;color:#e8f2ff;font-size:7px;font-weight:700;line-height:6.6px;text-align:center">U</div><div style="position:absolute;left:12px;top:0;font-size:7.6px;line-height:8.05px;color:#effff0;white-space:nowrap">Target</div></div><div style="position:absolute;left:0.6px;top:11.45px;width:31.800000000000004px;height:8.05px;background:#30d430;overflow:hidden"><div style="position:absolute;left:1.5px;top:0;font-size:7.6px;line-height:8.05px;color:#effff0;white-space:nowrap">CT:36.82</div></div><div style="position:absolute;left:0.6px;top:19.5px;width:31.800000000000004px;height:8.05px;background:#ff00ff;overflow:hidden"><div style="position:absolute;left:0.3px;top:0.2px;width:8.8px;height:7.7px;background:#3e60c6;border:0.7px solid #2a48a8;box-sizing:border-box;color:#e8f2ff;font-size:7px;font-weight:700;line-height:6.6px;text-align:center">U</div><div style="position:absolute;left:12px;top:0;font-size:7.6px;line-height:8.05px;color:#62007a;white-space:nowrap">Target</div></div><div style="position:absolute;left:0.6px;top:27.55px;width:31.800000000000004px;height:8.05px;background:#ff00ff;overflow:hidden"><div style="position:absolute;left:1.5px;top:0;font-size:7.6px;line-height:8.05px;color:#62007a;white-space:nowrap">CT:29.85</div></div><div style="position:absolute;left:0;top:0;width:33.2px;height:6.8px;background:#fff"></div><div style="position:absolute;left:-6px;top:1.2px;width:45.2px;text-align:center;font-size:6.9px;line-height:7px;color:#222;white-space:nowrap">C21</div></div>
<div style="position:absolute;left:667.8px;top:294.0px;width:33.2px;height:32.35px;overflow:hidden"><div style="position:absolute;left:0.6px;top:3.3999999999999986px;width:31.800000000000004px;height:8.05px;background:#30d430;overflow:hidden"><div style="position:absolute;left:0.3px;top:0.2px;width:8.8px;height:7.7px;background:#3e60c6;border:0.7px solid #2a48a8;box-sizing:border-box;color:#e8f2ff;font-size:7px;font-weight:700;line-height:6.6px;text-align:center">U</div><div style="position:absolute;left:12px;top:0;font-size:7.6px;line-height:8.05px;color:#effff0;white-space:nowrap">Target</div></div><div style="position:absolute;left:0.6px;top:11.45px;width:31.800000000000004px;height:8.05px;background:#30d430;overflow:hidden"><div style="position:absolute;left:1.5px;top:0;font-size:7.6px;line-height:8.05px;color:#effff0;white-space:nowrap">CT:36.91</div></div><div style="position:absolute;left:0.6px;top:19.5px;width:31.800000000000004px;height:8.05px;background:#ff00ff;overflow:hidden"><div style="position:absolute;left:0.3px;top:0.2px;width:8.8px;height:7.7px;background:#3e60c6;border:0.7px solid #2a48a8;box-sizing:border-box;color:#e8f2ff;font-size:7px;font-weight:700;line-height:6.6px;text-align:center">U</div><div style="position:absolute;left:12px;top:0;font-size:7.6px;line-height:8.05px;color:#62007a;white-space:nowrap">Target</div></div><div style="position:absolute;left:0.6px;top:27.55px;width:31.800000000000004px;height:8.05px;background:#ff00ff;overflow:hidden"><div style="position:absolute;left:1.5px;top:0;font-size:7.6px;line-height:8.05px;color:#62007a;white-space:nowrap">CT:29.85</div></div><div style="position:absolute;left:0;top:0;width:33.2px;height:6.8px;background:#fff"></div><div style="position:absolute;left:-6px;top:1.2px;width:45.2px;text-align:center;font-size:6.9px;line-height:7px;color:#222;white-space:nowrap">C72</div></div>
<div style="position:absolute;left:701.0px;top:294.0px;width:33.2px;height:32.35px;overflow:hidden"><div style="position:absolute;left:3px;top:3px;width:27.200000000000003px;height:9.45px;background:radial-gradient(ellipse at 50% 62%,#bcbcbc 0%,#bcbcbc 22%,rgba(255,255,255,0) 72%)"></div><div style="position:absolute;left:0.6px;top:11.45px;width:31.800000000000004px;height:8.05px;background:#30d430;overflow:hidden"><div style="position:absolute;left:0.3px;top:0.2px;width:8.8px;height:7.7px;background:#3e60c6;border:0.7px solid #2a48a8;box-sizing:border-box;color:#e8f2ff;font-size:7px;font-weight:700;line-height:6.6px;text-align:center">U</div><div style="position:absolute;left:12px;top:0;font-size:7.6px;line-height:8.05px;color:#effff0;white-space:nowrap">Target</div></div><div style="position:absolute;left:0.6px;top:19.5px;width:31.800000000000004px;height:8.05px;background:#ff00ff;overflow:hidden"><div style="position:absolute;left:0.3px;top:0.2px;width:8.8px;height:7.7px;background:#3e60c6;border:0.7px solid #2a48a8;box-sizing:border-box;color:#e8f2ff;font-size:7px;font-weight:700;line-height:6.6px;text-align:center">U</div><div style="position:absolute;left:12px;top:0;font-size:7.6px;line-height:8.05px;color:#62007a;white-space:nowrap">Target</div></div><div style="position:absolute;left:-6px;top:1.2px;width:45.2px;text-align:center;font-size:6.9px;line-height:7px;color:#222;white-space:nowrap">B10.1</div></div>
<div style="position:absolute;left:734.2px;top:294.0px;width:33.2px;height:32.35px;overflow:hidden"><div style="position:absolute;left:0.6px;top:3.3999999999999986px;width:31.800000000000004px;height:8.05px;background:#30d430;overflow:hidden"><div style="position:absolute;left:0.3px;top:0.2px;width:8.8px;height:7.7px;background:#3e60c6;border:0.7px solid #2a48a8;box-sizing:border-box;color:#e8f2ff;font-size:7px;font-weight:700;line-height:6.6px;text-align:center">U</div><div style="position:absolute;left:12px;top:0;font-size:7.6px;line-height:8.05px;color:#effff0;white-space:nowrap">Target</div></div><div style="position:absolute;left:0.6px;top:11.45px;width:31.800000000000004px;height:8.05px;background:#30d430;overflow:hidden"><div style="position:absolute;left:1.5px;top:0;font-size:7.6px;line-height:8.05px;color:#effff0;white-space:nowrap">CT:31.07</div></div><div style="position:absolute;left:0.6px;top:19.5px;width:31.800000000000004px;height:8.05px;background:#ff00ff;overflow:hidden"><div style="position:absolute;left:0.3px;top:0.2px;width:8.8px;height:7.7px;background:#3e60c6;border:0.7px solid #2a48a8;box-sizing:border-box;color:#e8f2ff;font-size:7px;font-weight:700;line-height:6.6px;text-align:center">U</div><div style="position:absolute;left:12px;top:0;font-size:7.6px;line-height:8.05px;color:#62007a;white-space:nowrap">Target</div></div><div style="position:absolute;left:0.6px;top:27.55px;width:31.800000000000004px;height:8.05px;background:#ff00ff;overflow:hidden"><div style="position:absolute;left:1.5px;top:0;font-size:7.6px;line-height:8.05px;color:#62007a;white-space:nowrap">CT:29.85</div></div><div style="position:absolute;left:0;top:0;width:33.2px;height:6.8px;background:#fff"></div><div style="position:absolute;left:-6px;top:1.2px;width:45.2px;text-align:center;font-size:6.9px;line-height:7px;color:#222;white-space:nowrap">B19.1</div></div>
<div style="position:absolute;left:767.4000000000001px;top:294.0px;width:33.2px;height:32.35px;overflow:hidden"><div style="position:absolute;left:0.6px;top:7.424999999999999px;width:31.800000000000004px;height:8.05px;background:#30d430;overflow:hidden"><div style="position:absolute;left:0.3px;top:0.2px;width:8.8px;height:7.7px;background:#3e60c6;border:0.7px solid #2a48a8;box-sizing:border-box;color:#e8f2ff;font-size:7px;font-weight:700;line-height:6.6px;text-align:center">U</div><div style="position:absolute;left:12px;top:0;font-size:7.6px;line-height:8.05px;color:#effff0;white-space:nowrap">Target</div></div><div style="position:absolute;left:0.6px;top:15.475px;width:31.800000000000004px;height:8.05px;background:#ff00ff;overflow:hidden"><div style="position:absolute;left:0.3px;top:0.2px;width:8.8px;height:7.7px;background:#3e60c6;border:0.7px solid #2a48a8;box-sizing:border-box;color:#e8f2ff;font-size:7px;font-weight:700;line-height:6.6px;text-align:center">U</div><div style="position:absolute;left:12px;top:0;font-size:7.6px;line-height:8.05px;color:#62007a;white-space:nowrap">Target</div></div><div style="position:absolute;left:0.6px;top:23.525px;width:31.800000000000004px;height:8.05px;background:#ff00ff;overflow:hidden"><div style="position:absolute;left:1.5px;top:0;font-size:7.6px;line-height:8.05px;color:#62007a;white-space:nowrap">CT:29.5</div></div><div style="position:absolute;left:-6px;top:1.2px;width:45.2px;text-align:center;font-size:6.9px;line-height:7px;color:#222;white-space:nowrap">B28.1</div></div>
<div style="position:absolute;left:800.6px;top:294.0px;width:33.2px;height:32.35px;overflow:hidden"><div style="position:absolute;left:0.6px;top:3.3999999999999986px;width:31.800000000000004px;height:8.05px;background:#30d430;overflow:hidden"><div style="position:absolute;left:0.3px;top:0.2px;width:8.8px;height:7.7px;background:#3e60c6;border:0.7px solid #2a48a8;box-sizing:border-box;color:#e8f2ff;font-size:7px;font-weight:700;line-height:6.6px;text-align:center">U</div><div style="position:absolute;left:12px;top:0;font-size:7.6px;line-height:8.05px;color:#effff0;white-space:nowrap">Target</div></div><div style="position:absolute;left:0.6px;top:11.45px;width:31.800000000000004px;height:8.05px;background:#30d430;overflow:hidden"><div style="position:absolute;left:1.5px;top:0;font-size:7.6px;line-height:8.05px;color:#effff0;white-space:nowrap">CT:31.07</div></div><div style="position:absolute;left:0.6px;top:19.5px;width:31.800000000000004px;height:8.05px;background:#ff00ff;overflow:hidden"><div style="position:absolute;left:0.3px;top:0.2px;width:8.8px;height:7.7px;background:#3e60c6;border:0.7px solid #2a48a8;box-sizing:border-box;color:#e8f2ff;font-size:7px;font-weight:700;line-height:6.6px;text-align:center">U</div><div style="position:absolute;left:12px;top:0;font-size:7.6px;line-height:8.05px;color:#62007a;white-space:nowrap">Target</div></div><div style="position:absolute;left:0.6px;top:27.55px;width:31.800000000000004px;height:8.05px;background:#ff00ff;overflow:hidden"><div style="position:absolute;left:1.5px;top:0;font-size:7.6px;line-height:8.05px;color:#62007a;white-space:nowrap">CT:29.85</div></div><div style="position:absolute;left:0;top:0;width:33.2px;height:6.8px;background:#fff"></div><div style="position:absolute;left:-6px;top:1.2px;width:45.2px;text-align:center;font-size:6.9px;line-height:7px;color:#222;white-space:nowrap">b7.2</div></div>
<div style="position:absolute;left:834.8px;top:295.0px;width:31.200000000000003px;height:30.35px;overflow:hidden"><div style="position:absolute;left:3.5px;top:3.5px;width:24.200000000000003px;height:23.35px;background:radial-gradient(closest-side,#d9d9d9 0%,#e3e3e3 50%,#ebebeb 100%);border-radius:6px;filter:blur(2.8px)"></div></div>
<div style="position:absolute;left:868.0px;top:295.0px;width:31.200000000000003px;height:30.35px;overflow:hidden"><div style="position:absolute;left:3.5px;top:3.5px;width:24.200000000000003px;height:23.35px;background:radial-gradient(closest-side,#d9d9d9 0%,#e3e3e3 50%,#ebebeb 100%);border-radius:6px;filter:blur(2.8px)"></div></div>
<div style="position:absolute;left:901.2px;top:295.0px;width:31.200000000000003px;height:30.35px;overflow:hidden"><div style="position:absolute;left:3.5px;top:3.5px;width:24.200000000000003px;height:23.35px;background:radial-gradient(closest-side,#d9d9d9 0%,#e3e3e3 50%,#ebebeb 100%);border-radius:6px;filter:blur(2.8px)"></div></div>
<div style="position:absolute;left:536.0px;top:327.35px;width:31.200000000000003px;height:30.35px;overflow:hidden"><div style="position:absolute;left:3.5px;top:3.5px;width:24.200000000000003px;height:23.35px;background:radial-gradient(closest-side,#d9d9d9 0%,#e3e3e3 50%,#ebebeb 100%);border-radius:6px;filter:blur(2.8px)"></div></div>
<div style="position:absolute;left:569.2px;top:327.35px;width:31.200000000000003px;height:30.35px;overflow:hidden"><div style="position:absolute;left:3.5px;top:3.5px;width:24.200000000000003px;height:23.35px;background:radial-gradient(closest-side,#d9d9d9 0%,#e3e3e3 50%,#ebebeb 100%);border-radius:6px;filter:blur(2.8px)"></div></div>
<div style="position:absolute;left:601.4px;top:326.35px;width:33.2px;height:32.35px;overflow:hidden"><div style="position:absolute;left:0.6px;top:7.424999999999999px;width:31.800000000000004px;height:8.05px;background:#30d430;overflow:hidden"><div style="position:absolute;left:0.3px;top:0.2px;width:8.8px;height:7.7px;background:#3e60c6;border:0.7px solid #2a48a8;box-sizing:border-box;color:#e8f2ff;font-size:7px;font-weight:700;line-height:6.6px;text-align:center">U</div><div style="position:absolute;left:12px;top:0;font-size:7.6px;line-height:8.05px;color:#effff0;white-space:nowrap">Target</div></div><div style="position:absolute;left:0.6px;top:15.475px;width:31.800000000000004px;height:8.05px;background:#ff00ff;overflow:hidden"><div style="position:absolute;left:0.3px;top:0.2px;width:8.8px;height:7.7px;background:#3e60c6;border:0.7px solid #2a48a8;box-sizing:border-box;color:#e8f2ff;font-size:7px;font-weight:700;line-height:6.6px;text-align:center">U</div><div style="position:absolute;left:12px;top:0;font-size:7.6px;line-height:8.05px;color:#62007a;white-space:nowrap">Target</div></div><div style="position:absolute;left:0.6px;top:23.525px;width:31.800000000000004px;height:8.05px;background:#ff00ff;overflow:hidden"><div style="position:absolute;left:1.5px;top:0;font-size:7.6px;line-height:8.05px;color:#62007a;white-space:nowrap">CT:29.9</div></div><div style="position:absolute;left:-6px;top:1.2px;width:45.2px;text-align:center;font-size:6.9px;line-height:7px;color:#222;white-space:nowrap">C2C.2</div></div>
<div style="position:absolute;left:634.6px;top:326.35px;width:33.2px;height:32.35px;overflow:hidden"><div style="position:absolute;left:0.6px;top:3.3999999999999986px;width:31.800000000000004px;height:8.05px;background:#30d430;overflow:hidden"><div style="position:absolute;left:0.3px;top:0.2px;width:8.8px;height:7.7px;background:#3e60c6;border:0.7px solid #2a48a8;box-sizing:border-box;color:#e8f2ff;font-size:7px;font-weight:700;line-height:6.6px;text-align:center">U</div><div style="position:absolute;left:12px;top:0;font-size:7.6px;line-height:8.05px;color:#effff0;white-space:nowrap">Target</div></div><div style="position:absolute;left:0.6px;top:11.45px;width:31.800000000000004px;height:8.05px;background:#30d430;overflow:hidden"><div style="position:absolute;left:1.5px;top:0;font-size:7.6px;line-height:8.05px;color:#effff0;white-space:nowrap">CT:35.18</div></div><div style="position:absolute;left:0.6px;top:19.5px;width:31.800000000000004px;height:8.05px;background:#ff00ff;overflow:hidden"><div style="position:absolute;left:0.3px;top:0.2px;width:8.8px;height:7.7px;background:#3e60c6;border:0.7px solid #2a48a8;box-sizing:border-box;color:#e8f2ff;font-size:7px;font-weight:700;line-height:6.6px;text-align:center">U</div><div style="position:absolute;left:12px;top:0;font-size:7.6px;line-height:8.05px;color:#62007a;white-space:nowrap">Target</div></div><div style="position:absolute;left:0.6px;top:27.55px;width:31.800000000000004px;height:8.05px;background:#ff00ff;overflow:hidden"><div style="position:absolute;left:1.5px;top:0;font-size:7.6px;line-height:8.05px;color:#62007a;white-space:nowrap">CT:29.85</div></div><div style="position:absolute;left:0;top:0;width:33.2px;height:6.8px;background:#fff"></div><div style="position:absolute;left:-6px;top:1.2px;width:45.2px;text-align:center;font-size:6.9px;line-height:7px;color:#222;white-space:nowrap">C22</div></div>
<div style="position:absolute;left:667.8px;top:326.35px;width:33.2px;height:32.35px;overflow:hidden"><div style="position:absolute;left:0.6px;top:3.3999999999999986px;width:31.800000000000004px;height:8.05px;background:#30d430;overflow:hidden"><div style="position:absolute;left:0.3px;top:0.2px;width:8.8px;height:7.7px;background:#3e60c6;border:0.7px solid #2a48a8;box-sizing:border-box;color:#e8f2ff;font-size:7px;font-weight:700;line-height:6.6px;text-align:center">U</div><div style="position:absolute;left:12px;top:0;font-size:7.6px;line-height:8.05px;color:#effff0;white-space:nowrap">Target</div></div><div style="position:absolute;left:0.6px;top:11.45px;width:31.800000000000004px;height:8.05px;background:#30d430;overflow:hidden"><div style="position:absolute;left:1.5px;top:0;font-size:7.6px;line-height:8.05px;color:#effff0;white-space:nowrap">CT:35.65</div></div><div style="position:absolute;left:0.6px;top:19.5px;width:31.800000000000004px;height:8.05px;background:#ff00ff;overflow:hidden"><div style="position:absolute;left:0.3px;top:0.2px;width:8.8px;height:7.7px;background:#3e60c6;border:0.7px solid #2a48a8;box-sizing:border-box;color:#e8f2ff;font-size:7px;font-weight:700;line-height:6.6px;text-align:center">U</div><div style="position:absolute;left:12px;top:0;font-size:7.6px;line-height:8.05px;color:#62007a;white-space:nowrap">Target</div></div><div style="position:absolute;left:0.6px;top:27.55px;width:31.800000000000004px;height:8.05px;background:#ff00ff;overflow:hidden"><div style="position:absolute;left:1.5px;top:0;font-size:7.6px;line-height:8.05px;color:#62007a;white-space:nowrap">CT:29.85</div></div><div style="position:absolute;left:0;top:0;width:33.2px;height:6.8px;background:#fff"></div><div style="position:absolute;left:-6px;top:1.2px;width:45.2px;text-align:center;font-size:6.9px;line-height:7px;color:#222;white-space:nowrap">C71</div></div>
<div style="position:absolute;left:701.0px;top:326.35px;width:33.2px;height:32.35px;overflow:hidden"><div style="position:absolute;left:0.6px;top:3.3999999999999986px;width:31.800000000000004px;height:8.05px;background:#30d430;overflow:hidden"><div style="position:absolute;left:0.3px;top:0.2px;width:8.8px;height:7.7px;background:#3e60c6;border:0.7px solid #2a48a8;box-sizing:border-box;color:#e8f2ff;font-size:7px;font-weight:700;line-height:6.6px;text-align:center">U</div><div style="position:absolute;left:12px;top:0;font-size:7.6px;line-height:8.05px;color:#effff0;white-space:nowrap">Target</div></div><div style="position:absolute;left:0.6px;top:11.45px;width:31.800000000000004px;height:8.05px;background:#30d430;overflow:hidden"><div style="position:absolute;left:1.5px;top:0;font-size:7.6px;line-height:8.05px;color:#effff0;white-space:nowrap">CT:33.57</div></div><div style="position:absolute;left:0.6px;top:19.5px;width:31.800000000000004px;height:8.05px;background:#ff00ff;overflow:hidden"><div style="position:absolute;left:0.3px;top:0.2px;width:8.8px;height:7.7px;background:#3e60c6;border:0.7px solid #2a48a8;box-sizing:border-box;color:#e8f2ff;font-size:7px;font-weight:700;line-height:6.6px;text-align:center">U</div><div style="position:absolute;left:12px;top:0;font-size:7.6px;line-height:8.05px;color:#62007a;white-space:nowrap">Target</div></div><div style="position:absolute;left:0.6px;top:27.55px;width:31.800000000000004px;height:8.05px;background:#ff00ff;overflow:hidden"><div style="position:absolute;left:1.5px;top:0;font-size:7.6px;line-height:8.05px;color:#62007a;white-space:nowrap">CT:29.85</div></div><div style="position:absolute;left:0;top:0;width:33.2px;height:6.8px;background:#fff"></div><div style="position:absolute;left:-6px;top:1.2px;width:45.2px;text-align:center;font-size:6.9px;line-height:7px;color:#222;white-space:nowrap">B11.1</div></div>
<div style="position:absolute;left:734.2px;top:326.35px;width:33.2px;height:32.35px;overflow:hidden"><div style="position:absolute;left:0.6px;top:3.3999999999999986px;width:31.800000000000004px;height:8.05px;background:#30d430;overflow:hidden"><div style="position:absolute;left:0.3px;top:0.2px;width:8.8px;height:7.7px;background:#3e60c6;border:0.7px solid #2a48a8;box-sizing:border-box;color:#e8f2ff;font-size:7px;font-weight:700;line-height:6.6px;text-align:center">U</div><div style="position:absolute;left:12px;top:0;font-size:7.6px;line-height:8.05px;color:#effff0;white-space:nowrap">Target</div></div><div style="position:absolute;left:0.6px;top:11.45px;width:31.800000000000004px;height:8.05px;background:#30d430;overflow:hidden"><div style="position:absolute;left:1.5px;top:0;font-size:7.6px;line-height:8.05px;color:#effff0;white-space:nowrap">CT:33.47</div></div><div style="position:absolute;left:0.6px;top:19.5px;width:31.800000000000004px;height:8.05px;background:#ff00ff;overflow:hidden"><div style="position:absolute;left:0.3px;top:0.2px;width:8.8px;height:7.7px;background:#3e60c6;border:0.7px solid #2a48a8;box-sizing:border-box;color:#e8f2ff;font-size:7px;font-weight:700;line-height:6.6px;text-align:center">U</div><div style="position:absolute;left:12px;top:0;font-size:7.6px;line-height:8.05px;color:#62007a;white-space:nowrap">Target</div></div><div style="position:absolute;left:0.6px;top:27.55px;width:31.800000000000004px;height:8.05px;background:#ff00ff;overflow:hidden"><div style="position:absolute;left:1.5px;top:0;font-size:7.6px;line-height:8.05px;color:#62007a;white-space:nowrap">CT:29.85</div></div><div style="position:absolute;left:0;top:0;width:33.2px;height:6.8px;background:#fff"></div><div style="position:absolute;left:-6px;top:1.2px;width:45.2px;text-align:center;font-size:6.9px;line-height:7px;color:#222;white-space:nowrap">B21.1</div></div>
<div style="position:absolute;left:767.4000000000001px;top:326.35px;width:33.2px;height:32.35px;overflow:hidden"><div style="position:absolute;left:0.6px;top:7.424999999999999px;width:31.800000000000004px;height:8.05px;background:#30d430;overflow:hidden"><div style="position:absolute;left:0.3px;top:0.2px;width:8.8px;height:7.7px;background:#3e60c6;border:0.7px solid #2a48a8;box-sizing:border-box;color:#e8f2ff;font-size:7px;font-weight:700;line-height:6.6px;text-align:center">U</div><div style="position:absolute;left:12px;top:0;font-size:7.6px;line-height:8.05px;color:#effff0;white-space:nowrap">Target</div></div><div style="position:absolute;left:0.6px;top:15.475px;width:31.800000000000004px;height:8.05px;background:#ff00ff;overflow:hidden"><div style="position:absolute;left:0.3px;top:0.2px;width:8.8px;height:7.7px;background:#3e60c6;border:0.7px solid #2a48a8;box-sizing:border-box;color:#e8f2ff;font-size:7px;font-weight:700;line-height:6.6px;text-align:center">U</div><div style="position:absolute;left:12px;top:0;font-size:7.6px;line-height:8.05px;color:#62007a;white-space:nowrap">Target</div></div><div style="position:absolute;left:0.6px;top:23.525px;width:31.800000000000004px;height:8.05px;background:#ff00ff;overflow:hidden"><div style="position:absolute;left:1.5px;top:0;font-size:7.6px;line-height:8.05px;color:#62007a;white-space:nowrap">CT:30.14</div></div><div style="position:absolute;left:-6px;top:1.2px;width:45.2px;text-align:center;font-size:6.9px;line-height:7px;color:#222;white-space:nowrap">B29.1</div></div>
<div style="position:absolute;left:800.6px;top:326.35px;width:33.2px;height:32.35px;overflow:hidden"><div style="position:absolute;left:0.6px;top:11.45px;width:31.800000000000004px;height:8.05px;background:#30d430;overflow:hidden"><div style="position:absolute;left:0.3px;top:0.2px;width:8.8px;height:7.7px;background:#3e60c6;border:0.7px solid #2a48a8;box-sizing:border-box;color:#e8f2ff;font-size:7px;font-weight:700;line-height:6.6px;text-align:center">U</div><div style="position:absolute;left:12px;top:0;font-size:7.6px;line-height:8.05px;color:#effff0;white-space:nowrap">Target</div></div><div style="position:absolute;left:0.6px;top:19.5px;width:31.800000000000004px;height:8.05px;background:#ff00ff;overflow:hidden"><div style="position:absolute;left:0.3px;top:0.2px;width:8.8px;height:7.7px;background:#3e60c6;border:0.7px solid #2a48a8;box-sizing:border-box;color:#e8f2ff;font-size:7px;font-weight:700;line-height:6.6px;text-align:center">U</div><div style="position:absolute;left:12px;top:0;font-size:7.6px;line-height:8.05px;color:#62007a;white-space:nowrap">Target</div></div><div style="position:absolute;left:-6px;top:1.2px;width:45.2px;text-align:center;font-size:6.9px;line-height:7px;color:#222;white-space:nowrap">b8.2</div></div>
<div style="position:absolute;left:834.8px;top:327.35px;width:31.200000000000003px;height:30.35px;overflow:hidden"><div style="position:absolute;left:3.5px;top:3.5px;width:24.200000000000003px;height:23.35px;background:radial-gradient(closest-side,#d9d9d9 0%,#e3e3e3 50%,#ebebeb 100%);border-radius:6px;filter:blur(2.8px)"></div></div>
<div style="position:absolute;left:868.0px;top:327.35px;width:31.200000000000003px;height:30.35px;overflow:hidden"><div style="position:absolute;left:3.5px;top:3.5px;width:24.200000000000003px;height:23.35px;background:radial-gradient(closest-side,#d9d9d9 0%,#e3e3e3 50%,#ebebeb 100%);border-radius:6px;filter:blur(2.8px)"></div></div>
<div style="position:absolute;left:901.2px;top:327.35px;width:31.200000000000003px;height:30.35px;overflow:hidden"><div style="position:absolute;left:3.5px;top:3.5px;width:24.200000000000003px;height:23.35px;background:radial-gradient(closest-side,#d9d9d9 0%,#e3e3e3 50%,#ebebeb 100%);border-radius:6px;filter:blur(2.8px)"></div></div>
<div style="position:absolute;left:536.0px;top:359.70000000000005px;width:31.200000000000003px;height:30.35px;overflow:hidden"><div style="position:absolute;left:3.5px;top:3.5px;width:24.200000000000003px;height:23.35px;background:radial-gradient(closest-side,#d9d9d9 0%,#e3e3e3 50%,#ebebeb 100%);border-radius:6px;filter:blur(2.8px)"></div></div>
<div style="position:absolute;left:569.2px;top:359.70000000000005px;width:31.200000000000003px;height:30.35px;overflow:hidden"><div style="position:absolute;left:3.5px;top:3.5px;width:24.200000000000003px;height:23.35px;background:radial-gradient(closest-side,#d9d9d9 0%,#e3e3e3 50%,#ebebeb 100%);border-radius:6px;filter:blur(2.8px)"></div></div>
<div style="position:absolute;left:601.4px;top:358.70000000000005px;width:33.2px;height:32.35px;overflow:hidden"><div style="position:absolute;left:0.6px;top:3.3999999999999986px;width:31.800000000000004px;height:8.05px;background:#30d430;overflow:hidden"><div style="position:absolute;left:0.3px;top:0.2px;width:8.8px;height:7.7px;background:#3e60c6;border:0.7px solid #2a48a8;box-sizing:border-box;color:#e8f2ff;font-size:7px;font-weight:700;line-height:6.6px;text-align:center">U</div><div style="position:absolute;left:12px;top:0;font-size:7.6px;line-height:8.05px;color:#effff0;white-space:nowrap">Target</div></div><div style="position:absolute;left:0.6px;top:11.45px;width:31.800000000000004px;height:8.05px;background:#30d430;overflow:hidden"><div style="position:absolute;left:1.5px;top:0;font-size:7.6px;line-height:8.05px;color:#effff0;white-space:nowrap">CT:36.67</div></div><div style="position:absolute;left:0.6px;top:19.5px;width:31.800000000000004px;height:8.05px;background:#ff00ff;overflow:hidden"><div style="position:absolute;left:0.3px;top:0.2px;width:8.8px;height:7.7px;background:#3e60c6;border:0.7px solid #2a48a8;box-sizing:border-box;color:#e8f2ff;font-size:7px;font-weight:700;line-height:6.6px;text-align:center">U</div><div style="position:absolute;left:12px;top:0;font-size:7.6px;line-height:8.05px;color:#62007a;white-space:nowrap">Target</div></div><div style="position:absolute;left:0.6px;top:27.55px;width:31.800000000000004px;height:8.05px;background:#ff00ff;overflow:hidden"><div style="position:absolute;left:1.5px;top:0;font-size:7.6px;line-height:8.05px;color:#62007a;white-space:nowrap">CT:29.85</div></div><div style="position:absolute;left:0;top:0;width:33.2px;height:6.8px;background:#fff"></div><div style="position:absolute;left:-6px;top:1.2px;width:45.2px;text-align:center;font-size:6.9px;line-height:7px;color:#222;white-space:nowrap">C3C.2</div></div>
<div style="position:absolute;left:634.6px;top:358.70000000000005px;width:33.2px;height:32.35px;overflow:hidden"><div style="position:absolute;left:0.6px;top:7.424999999999999px;width:31.800000000000004px;height:8.05px;background:#30d430;overflow:hidden"><div style="position:absolute;left:0.3px;top:0.2px;width:8.8px;height:7.7px;background:#3e60c6;border:0.7px solid #2a48a8;box-sizing:border-box;color:#e8f2ff;font-size:7px;font-weight:700;line-height:6.6px;text-align:center">U</div><div style="position:absolute;left:12px;top:0;font-size:7.6px;line-height:8.05px;color:#effff0;white-space:nowrap">Target</div></div><div style="position:absolute;left:0.6px;top:15.475px;width:31.800000000000004px;height:8.05px;background:#ff00ff;overflow:hidden"><div style="position:absolute;left:0.3px;top:0.2px;width:8.8px;height:7.7px;background:#3e60c6;border:0.7px solid #2a48a8;box-sizing:border-box;color:#e8f2ff;font-size:7px;font-weight:700;line-height:6.6px;text-align:center">U</div><div style="position:absolute;left:12px;top:0;font-size:7.6px;line-height:8.05px;color:#62007a;white-space:nowrap">Target</div></div><div style="position:absolute;left:0.6px;top:23.525px;width:31.800000000000004px;height:8.05px;background:#ff00ff;overflow:hidden"><div style="position:absolute;left:1.5px;top:0;font-size:7.6px;line-height:8.05px;color:#62007a;white-space:nowrap">CT:30.28</div></div><div style="position:absolute;left:-6px;top:1.2px;width:45.2px;text-align:center;font-size:6.9px;line-height:7px;color:#222;white-space:nowrap">C32</div></div>
<div style="position:absolute;left:667.8px;top:358.70000000000005px;width:33.2px;height:32.35px;overflow:hidden"><div style="position:absolute;left:0.6px;top:7.424999999999999px;width:31.800000000000004px;height:8.05px;background:#30d430;overflow:hidden"><div style="position:absolute;left:0.3px;top:0.2px;width:8.8px;height:7.7px;background:#3e60c6;border:0.7px solid #2a48a8;box-sizing:border-box;color:#e8f2ff;font-size:7px;font-weight:700;line-height:6.6px;text-align:center">U</div><div style="position:absolute;left:12px;top:0;font-size:7.6px;line-height:8.05px;color:#effff0;white-space:nowrap">Target</div></div><div style="position:absolute;left:0.6px;top:15.475px;width:31.800000000000004px;height:8.05px;background:#ff00ff;overflow:hidden"><div style="position:absolute;left:0.3px;top:0.2px;width:8.8px;height:7.7px;background:#3e60c6;border:0.7px solid #2a48a8;box-sizing:border-box;color:#e8f2ff;font-size:7px;font-weight:700;line-height:6.6px;text-align:center">U</div><div style="position:absolute;left:12px;top:0;font-size:7.6px;line-height:8.05px;color:#62007a;white-space:nowrap">Target</div></div><div style="position:absolute;left:0.6px;top:23.525px;width:31.800000000000004px;height:8.05px;background:#ff00ff;overflow:hidden"><div style="position:absolute;left:1.5px;top:0;font-size:7.6px;line-height:8.05px;color:#62007a;white-space:nowrap">CT:30.04</div></div><div style="position:absolute;left:-6px;top:1.2px;width:45.2px;text-align:center;font-size:6.9px;line-height:7px;color:#222;white-space:nowrap">B1.1</div></div>
<div style="position:absolute;left:701.0px;top:358.70000000000005px;width:33.2px;height:32.35px;overflow:hidden"><div style="position:absolute;left:3px;top:3px;width:27.200000000000003px;height:9.45px;background:radial-gradient(ellipse at 50% 62%,#cca0f0 0%,#cca0f0 22%,rgba(255,255,255,0) 72%)"></div><div style="position:absolute;left:0.6px;top:11.45px;width:31.800000000000004px;height:8.05px;background:#30d430;overflow:hidden"><div style="position:absolute;left:0.3px;top:0.2px;width:8.8px;height:7.7px;background:#3e60c6;border:0.7px solid #2a48a8;box-sizing:border-box;color:#e8f2ff;font-size:7px;font-weight:700;line-height:6.6px;text-align:center">U</div><div style="position:absolute;left:12px;top:0;font-size:7.6px;line-height:8.05px;color:#effff0;white-space:nowrap">Target</div></div><div style="position:absolute;left:0.6px;top:19.5px;width:31.800000000000004px;height:8.05px;background:#ff00ff;overflow:hidden"><div style="position:absolute;left:0.3px;top:0.2px;width:8.8px;height:7.7px;background:#3e60c6;border:0.7px solid #2a48a8;box-sizing:border-box;color:#e8f2ff;font-size:7px;font-weight:700;line-height:6.6px;text-align:center">U</div><div style="position:absolute;left:12px;top:0;font-size:7.6px;line-height:8.05px;color:#62007a;white-space:nowrap">Target</div></div><div style="position:absolute;left:-6px;top:1.2px;width:45.2px;text-align:center;font-size:6.9px;line-height:7px;color:#222;white-space:nowrap">B12.1</div></div>
<div style="position:absolute;left:734.2px;top:358.70000000000005px;width:33.2px;height:32.35px;overflow:hidden"><div style="position:absolute;left:0.6px;top:7.424999999999999px;width:31.800000000000004px;height:8.05px;background:#30d430;overflow:hidden"><div style="position:absolute;left:0.3px;top:0.2px;width:8.8px;height:7.7px;background:#3e60c6;border:0.7px solid #2a48a8;box-sizing:border-box;color:#e8f2ff;font-size:7px;font-weight:700;line-height:6.6px;text-align:center">U</div><div style="position:absolute;left:12px;top:0;font-size:7.6px;line-height:8.05px;color:#effff0;white-space:nowrap">Target</div></div><div style="position:absolute;left:0.6px;top:15.475px;width:31.800000000000004px;height:8.05px;background:#30d430;overflow:hidden"><div style="position:absolute;left:1.5px;top:0;font-size:7.6px;line-height:8.05px;color:#effff0;white-space:nowrap">CT:17.87</div></div><div style="position:absolute;left:0.6px;top:23.525px;width:31.800000000000004px;height:8.05px;background:#ff00ff;overflow:hidden"><div style="position:absolute;left:0.3px;top:0.2px;width:8.8px;height:7.7px;background:#3e60c6;border:0.7px solid #2a48a8;box-sizing:border-box;color:#e8f2ff;font-size:7px;font-weight:700;line-height:6.6px;text-align:center">U</div><div style="position:absolute;left:12px;top:0;font-size:7.6px;line-height:8.05px;color:#62007a;white-space:nowrap">Target</div></div><div style="position:absolute;left:-6px;top:1.2px;width:45.2px;text-align:center;font-size:6.9px;line-height:7px;color:#222;white-space:nowrap">B22.1</div></div>
<div style="position:absolute;left:767.4000000000001px;top:358.70000000000005px;width:33.2px;height:32.35px;overflow:hidden"><div style="position:absolute;left:0.6px;top:7.424999999999999px;width:31.800000000000004px;height:8.05px;background:#30d430;overflow:hidden"><div style="position:absolute;left:0.3px;top:0.2px;width:8.8px;height:7.7px;background:#3e60c6;border:0.7px solid #2a48a8;box-sizing:border-box;color:#e8f2ff;font-size:7px;font-weight:700;line-height:6.6px;text-align:center">U</div><div style="position:absolute;left:12px;top:0;font-size:7.6px;line-height:8.05px;color:#effff0;white-space:nowrap">Target</div></div><div style="position:absolute;left:0.6px;top:15.475px;width:31.800000000000004px;height:8.05px;background:#ff00ff;overflow:hidden"><div style="position:absolute;left:0.3px;top:0.2px;width:8.8px;height:7.7px;background:#3e60c6;border:0.7px solid #2a48a8;box-sizing:border-box;color:#e8f2ff;font-size:7px;font-weight:700;line-height:6.6px;text-align:center">U</div><div style="position:absolute;left:12px;top:0;font-size:7.6px;line-height:8.05px;color:#62007a;white-space:nowrap">Target</div></div><div style="position:absolute;left:0.6px;top:23.525px;width:31.800000000000004px;height:8.05px;background:#ff00ff;overflow:hidden"><div style="position:absolute;left:1.5px;top:0;font-size:7.6px;line-height:8.05px;color:#62007a;white-space:nowrap">CT:30.04</div></div><div style="position:absolute;left:-6px;top:1.2px;width:45.2px;text-align:center;font-size:6.9px;line-height:7px;color:#222;white-space:nowrap">B31.1</div></div>
<div style="position:absolute;left:800.6px;top:358.70000000000005px;width:33.2px;height:32.35px;overflow:hidden"><div style="position:absolute;left:0.6px;top:11.45px;width:31.800000000000004px;height:8.05px;background:#30d430;overflow:hidden"><div style="position:absolute;left:0.3px;top:0.2px;width:8.8px;height:7.7px;background:#3e60c6;border:0.7px solid #2a48a8;box-sizing:border-box;color:#e8f2ff;font-size:7px;font-weight:700;line-height:6.6px;text-align:center">U</div><div style="position:absolute;left:12px;top:0;font-size:7.6px;line-height:8.05px;color:#effff0;white-space:nowrap">Target</div></div><div style="position:absolute;left:0.6px;top:19.5px;width:31.800000000000004px;height:8.05px;background:#ff00ff;overflow:hidden"><div style="position:absolute;left:0.3px;top:0.2px;width:8.8px;height:7.7px;background:#3e60c6;border:0.7px solid #2a48a8;box-sizing:border-box;color:#e8f2ff;font-size:7px;font-weight:700;line-height:6.6px;text-align:center">U</div><div style="position:absolute;left:12px;top:0;font-size:7.6px;line-height:8.05px;color:#62007a;white-space:nowrap">Target</div></div><div style="position:absolute;left:-6px;top:1.2px;width:45.2px;text-align:center;font-size:6.9px;line-height:7px;color:#222;white-space:nowrap">B10.2</div></div>
<div style="position:absolute;left:834.8px;top:359.70000000000005px;width:31.200000000000003px;height:30.35px;overflow:hidden"><div style="position:absolute;left:3.5px;top:3.5px;width:24.200000000000003px;height:23.35px;background:radial-gradient(closest-side,#d9d9d9 0%,#e3e3e3 50%,#ebebeb 100%);border-radius:6px;filter:blur(2.8px)"></div></div>
<div style="position:absolute;left:868.0px;top:359.70000000000005px;width:31.200000000000003px;height:30.35px;overflow:hidden"><div style="position:absolute;left:3.5px;top:3.5px;width:24.200000000000003px;height:23.35px;background:radial-gradient(closest-side,#d9d9d9 0%,#e3e3e3 50%,#ebebeb 100%);border-radius:6px;filter:blur(2.8px)"></div></div>
<div style="position:absolute;left:901.2px;top:359.70000000000005px;width:31.200000000000003px;height:30.35px;overflow:hidden"><div style="position:absolute;left:3.5px;top:3.5px;width:24.200000000000003px;height:23.35px;background:radial-gradient(closest-side,#d9d9d9 0%,#e3e3e3 50%,#ebebeb 100%);border-radius:6px;filter:blur(2.8px)"></div></div>
<div style="position:absolute;left:536.0px;top:392.05px;width:31.200000000000003px;height:30.35px;overflow:hidden"><div style="position:absolute;left:3.5px;top:3.5px;width:24.200000000000003px;height:23.35px;background:radial-gradient(closest-side,#d9d9d9 0%,#e3e3e3 50%,#ebebeb 100%);border-radius:6px;filter:blur(2.8px)"></div></div>
<div style="position:absolute;left:569.2px;top:392.05px;width:31.200000000000003px;height:30.35px;overflow:hidden"><div style="position:absolute;left:3.5px;top:3.5px;width:24.200000000000003px;height:23.35px;background:radial-gradient(closest-side,#d9d9d9 0%,#e3e3e3 50%,#ebebeb 100%);border-radius:6px;filter:blur(2.8px)"></div></div>
<div style="position:absolute;left:601.4px;top:391.05px;width:33.2px;height:32.35px;overflow:hidden"><div style="position:absolute;left:0.6px;top:3.3999999999999986px;width:31.800000000000004px;height:8.05px;background:#30d430;overflow:hidden"><div style="position:absolute;left:0.3px;top:0.2px;width:8.8px;height:7.7px;background:#3e60c6;border:0.7px solid #2a48a8;box-sizing:border-box;color:#e8f2ff;font-size:7px;font-weight:700;line-height:6.6px;text-align:center">U</div><div style="position:absolute;left:12px;top:0;font-size:7.6px;line-height:8.05px;color:#effff0;white-space:nowrap">Target</div></div><div style="position:absolute;left:0.6px;top:11.45px;width:31.800000000000004px;height:8.05px;background:#30d430;overflow:hidden"><div style="position:absolute;left:1.5px;top:0;font-size:7.6px;line-height:8.05px;color:#effff0;white-space:nowrap">CT:36.08</div></div><div style="position:absolute;left:0.6px;top:19.5px;width:31.800000000000004px;height:8.05px;background:#ff00ff;overflow:hidden"><div style="position:absolute;left:0.3px;top:0.2px;width:8.8px;height:7.7px;background:#3e60c6;border:0.7px solid #2a48a8;box-sizing:border-box;color:#e8f2ff;font-size:7px;font-weight:700;line-height:6.6px;text-align:center">U</div><div style="position:absolute;left:12px;top:0;font-size:7.6px;line-height:8.05px;color:#62007a;white-space:nowrap">Target</div></div><div style="position:absolute;left:0.6px;top:27.55px;width:31.800000000000004px;height:8.05px;background:#ff00ff;overflow:hidden"><div style="position:absolute;left:1.5px;top:0;font-size:7.6px;line-height:8.05px;color:#62007a;white-space:nowrap">CT:29.85</div></div><div style="position:absolute;left:0;top:0;width:33.2px;height:6.8px;background:#fff"></div><div style="position:absolute;left:-6px;top:1.2px;width:45.2px;text-align:center;font-size:6.9px;line-height:7px;color:#222;white-space:nowrap">C4C.2</div></div>
<div style="position:absolute;left:634.6px;top:391.05px;width:33.2px;height:32.35px;overflow:hidden"><div style="position:absolute;left:0.6px;top:7.424999999999999px;width:31.800000000000004px;height:8.05px;background:#30d430;overflow:hidden"><div style="position:absolute;left:0.3px;top:0.2px;width:8.8px;height:7.7px;background:#3e60c6;border:0.7px solid #2a48a8;box-sizing:border-box;color:#e8f2ff;font-size:7px;font-weight:700;line-height:6.6px;text-align:center">U</div><div style="position:absolute;left:12px;top:0;font-size:7.6px;line-height:8.05px;color:#effff0;white-space:nowrap">Target</div></div><div style="position:absolute;left:0.6px;top:15.475px;width:31.800000000000004px;height:8.05px;background:#ff00ff;overflow:hidden"><div style="position:absolute;left:0.3px;top:0.2px;width:8.8px;height:7.7px;background:#3e60c6;border:0.7px solid #2a48a8;box-sizing:border-box;color:#e8f2ff;font-size:7px;font-weight:700;line-height:6.6px;text-align:center">U</div><div style="position:absolute;left:12px;top:0;font-size:7.6px;line-height:8.05px;color:#62007a;white-space:nowrap">Target</div></div><div style="position:absolute;left:0.6px;top:23.525px;width:31.800000000000004px;height:8.05px;background:#ff00ff;overflow:hidden"><div style="position:absolute;left:1.5px;top:0;font-size:7.6px;line-height:8.05px;color:#62007a;white-space:nowrap">CT:30.26</div></div><div style="position:absolute;left:-6px;top:1.2px;width:45.2px;text-align:center;font-size:6.9px;line-height:7px;color:#222;white-space:nowrap">C41</div></div>
<div style="position:absolute;left:667.8px;top:391.05px;width:33.2px;height:32.35px;overflow:hidden"><div style="position:absolute;left:0.6px;top:3.3999999999999986px;width:31.800000000000004px;height:8.05px;background:#30d430;overflow:hidden"><div style="position:absolute;left:0.3px;top:0.2px;width:8.8px;height:7.7px;background:#3e60c6;border:0.7px solid #2a48a8;box-sizing:border-box;color:#e8f2ff;font-size:7px;font-weight:700;line-height:6.6px;text-align:center">U</div><div style="position:absolute;left:12px;top:0;font-size:7.6px;line-height:8.05px;color:#effff0;white-space:nowrap">Target</div></div><div style="position:absolute;left:0.6px;top:11.45px;width:31.800000000000004px;height:8.05px;background:#30d430;overflow:hidden"><div style="position:absolute;left:1.5px;top:0;font-size:7.6px;line-height:8.05px;color:#effff0;white-space:nowrap">CT:34.62</div></div><div style="position:absolute;left:0.6px;top:19.5px;width:31.800000000000004px;height:8.05px;background:#ff00ff;overflow:hidden"><div style="position:absolute;left:0.3px;top:0.2px;width:8.8px;height:7.7px;background:#3e60c6;border:0.7px solid #2a48a8;box-sizing:border-box;color:#e8f2ff;font-size:7px;font-weight:700;line-height:6.6px;text-align:center">U</div><div style="position:absolute;left:12px;top:0;font-size:7.6px;line-height:8.05px;color:#62007a;white-space:nowrap">Target</div></div><div style="position:absolute;left:0.6px;top:27.55px;width:31.800000000000004px;height:8.05px;background:#ff00ff;overflow:hidden"><div style="position:absolute;left:1.5px;top:0;font-size:7.6px;line-height:8.05px;color:#62007a;white-space:nowrap">CT:29.85</div></div><div style="position:absolute;left:0;top:0;width:33.2px;height:6.8px;background:#fff"></div><div style="position:absolute;left:-6px;top:1.2px;width:45.2px;text-align:center;font-size:6.9px;line-height:7px;color:#222;white-space:nowrap">B2.1</div></div>
<div style="position:absolute;left:701.0px;top:391.05px;width:33.2px;height:32.35px;overflow:hidden"><div style="position:absolute;left:0.6px;top:7.424999999999999px;width:31.800000000000004px;height:8.05px;background:#30d430;overflow:hidden"><div style="position:absolute;left:0.3px;top:0.2px;width:8.8px;height:7.7px;background:#3e60c6;border:0.7px solid #2a48a8;box-sizing:border-box;color:#e8f2ff;font-size:7px;font-weight:700;line-height:6.6px;text-align:center">U</div><div style="position:absolute;left:12px;top:0;font-size:7.6px;line-height:8.05px;color:#effff0;white-space:nowrap">Target</div></div><div style="position:absolute;left:0.6px;top:15.475px;width:31.800000000000004px;height:8.05px;background:#ff00ff;overflow:hidden"><div style="position:absolute;left:0.3px;top:0.2px;width:8.8px;height:7.7px;background:#3e60c6;border:0.7px solid #2a48a8;box-sizing:border-box;color:#e8f2ff;font-size:7px;font-weight:700;line-height:6.6px;text-align:center">U</div><div style="position:absolute;left:12px;top:0;font-size:7.6px;line-height:8.05px;color:#62007a;white-space:nowrap">Target</div></div><div style="position:absolute;left:0.6px;top:23.525px;width:31.800000000000004px;height:8.05px;background:#ff00ff;overflow:hidden"><div style="position:absolute;left:1.5px;top:0;font-size:7.6px;line-height:8.05px;color:#62007a;white-space:nowrap">CT:30.6</div></div><div style="position:absolute;left:-6px;top:1.2px;width:45.2px;text-align:center;font-size:6.9px;line-height:7px;color:#222;white-space:nowrap">B14.1</div></div>
<div style="position:absolute;left:734.2px;top:391.05px;width:33.2px;height:32.35px;overflow:hidden"><div style="position:absolute;left:0.6px;top:7.424999999999999px;width:31.800000000000004px;height:8.05px;background:#30d430;overflow:hidden"><div style="position:absolute;left:0.3px;top:0.2px;width:8.8px;height:7.7px;background:#3e60c6;border:0.7px solid #2a48a8;box-sizing:border-box;color:#e8f2ff;font-size:7px;font-weight:700;line-height:6.6px;text-align:center">U</div><div style="position:absolute;left:12px;top:0;font-size:7.6px;line-height:8.05px;color:#effff0;white-space:nowrap">Target</div></div><div style="position:absolute;left:0.6px;top:15.475px;width:31.800000000000004px;height:8.05px;background:#ff00ff;overflow:hidden"><div style="position:absolute;left:0.3px;top:0.2px;width:8.8px;height:7.7px;background:#3e60c6;border:0.7px solid #2a48a8;box-sizing:border-box;color:#e8f2ff;font-size:7px;font-weight:700;line-height:6.6px;text-align:center">U</div><div style="position:absolute;left:12px;top:0;font-size:7.6px;line-height:8.05px;color:#62007a;white-space:nowrap">Target</div></div><div style="position:absolute;left:0.6px;top:23.525px;width:31.800000000000004px;height:8.05px;background:#ff00ff;overflow:hidden"><div style="position:absolute;left:1.5px;top:0;font-size:7.6px;line-height:8.05px;color:#62007a;white-space:nowrap">CT:29.87</div></div><div style="position:absolute;left:-6px;top:1.2px;width:45.2px;text-align:center;font-size:6.9px;line-height:7px;color:#222;white-space:nowrap">B23.1</div></div>
<div style="position:absolute;left:767.4000000000001px;top:391.05px;width:33.2px;height:32.35px;overflow:hidden"><div style="position:absolute;left:0.6px;top:3.3999999999999986px;width:31.800000000000004px;height:8.05px;background:#30d430;overflow:hidden"><div style="position:absolute;left:0.3px;top:0.2px;width:8.8px;height:7.7px;background:#3e60c6;border:0.7px solid #2a48a8;box-sizing:border-box;color:#e8f2ff;font-size:7px;font-weight:700;line-height:6.6px;text-align:center">U</div><div style="position:absolute;left:12px;top:0;font-size:7.6px;line-height:8.05px;color:#effff0;white-space:nowrap">Target</div></div><div style="position:absolute;left:0.6px;top:11.45px;width:31.800000000000004px;height:8.05px;background:#30d430;overflow:hidden"><div style="position:absolute;left:1.5px;top:0;font-size:7.6px;line-height:8.05px;color:#effff0;white-space:nowrap">CT:31.04</div></div><div style="position:absolute;left:0.6px;top:19.5px;width:31.800000000000004px;height:8.05px;background:#ff00ff;overflow:hidden"><div style="position:absolute;left:0.3px;top:0.2px;width:8.8px;height:7.7px;background:#3e60c6;border:0.7px solid #2a48a8;box-sizing:border-box;color:#e8f2ff;font-size:7px;font-weight:700;line-height:6.6px;text-align:center">U</div><div style="position:absolute;left:12px;top:0;font-size:7.6px;line-height:8.05px;color:#62007a;white-space:nowrap">Target</div></div><div style="position:absolute;left:0.6px;top:27.55px;width:31.800000000000004px;height:8.05px;background:#ff00ff;overflow:hidden"><div style="position:absolute;left:1.5px;top:0;font-size:7.6px;line-height:8.05px;color:#62007a;white-space:nowrap">CT:29.85</div></div><div style="position:absolute;left:0;top:0;width:33.2px;height:6.8px;background:#fff"></div><div style="position:absolute;left:-6px;top:1.2px;width:45.2px;text-align:center;font-size:6.9px;line-height:7px;color:#222;white-space:nowrap">B32.1</div></div>
<div style="position:absolute;left:800.6px;top:391.05px;width:33.2px;height:32.35px;overflow:hidden"><div style="position:absolute;left:0.6px;top:3.3999999999999986px;width:31.800000000000004px;height:8.05px;background:#30d430;overflow:hidden"><div style="position:absolute;left:0.3px;top:0.2px;width:8.8px;height:7.7px;background:#3e60c6;border:0.7px solid #2a48a8;box-sizing:border-box;color:#e8f2ff;font-size:7px;font-weight:700;line-height:6.6px;text-align:center">U</div><div style="position:absolute;left:12px;top:0;font-size:7.6px;line-height:8.05px;color:#effff0;white-space:nowrap">Target</div></div><div style="position:absolute;left:0.6px;top:11.45px;width:31.800000000000004px;height:8.05px;background:#30d430;overflow:hidden"><div style="position:absolute;left:1.5px;top:0;font-size:7.6px;line-height:8.05px;color:#effff0;white-space:nowrap">CT:14.78</div></div><div style="position:absolute;left:0.6px;top:19.5px;width:31.800000000000004px;height:8.05px;background:#ff00ff;overflow:hidden"><div style="position:absolute;left:0.3px;top:0.2px;width:8.8px;height:7.7px;background:#3e60c6;border:0.7px solid #2a48a8;box-sizing:border-box;color:#e8f2ff;font-size:7px;font-weight:700;line-height:6.6px;text-align:center">U</div><div style="position:absolute;left:12px;top:0;font-size:7.6px;line-height:8.05px;color:#62007a;white-space:nowrap">Target</div></div><div style="position:absolute;left:0.6px;top:27.55px;width:31.800000000000004px;height:8.05px;background:#ff00ff;overflow:hidden"><div style="position:absolute;left:1.5px;top:0;font-size:7.6px;line-height:8.05px;color:#62007a;white-space:nowrap">CT:29.85</div></div><div style="position:absolute;left:0.6px;top:0.4px;width:31.800000000000004px;height:6.4px;background:#b8d8f2"></div><div style="position:absolute;left:9.600000000000001px;top:2px;width:14px;height:4.8px;background:#fff;clip-path:polygon(50% 0,100% 100%,0 100%);filter:blur(0.6px)"></div><div style="position:absolute;left:-6px;top:1.2px;width:45.2px;text-align:center;font-size:6.9px;line-height:7px;color:#222;white-space:nowrap">B11.2</div></div>
<div style="position:absolute;left:834.8px;top:392.05px;width:31.200000000000003px;height:30.35px;overflow:hidden"><div style="position:absolute;left:3.5px;top:3.5px;width:24.200000000000003px;height:23.35px;background:radial-gradient(closest-side,#d9d9d9 0%,#e3e3e3 50%,#ebebeb 100%);border-radius:6px;filter:blur(2.8px)"></div></div>
<div style="position:absolute;left:868.0px;top:392.05px;width:31.200000000000003px;height:30.35px;overflow:hidden"><div style="position:absolute;left:3.5px;top:3.5px;width:24.200000000000003px;height:23.35px;background:radial-gradient(closest-side,#d9d9d9 0%,#e3e3e3 50%,#ebebeb 100%);border-radius:6px;filter:blur(2.8px)"></div></div>
<div style="position:absolute;left:901.2px;top:392.05px;width:31.200000000000003px;height:30.35px;overflow:hidden"><div style="position:absolute;left:3.5px;top:3.5px;width:24.200000000000003px;height:23.35px;background:radial-gradient(closest-side,#d9d9d9 0%,#e3e3e3 50%,#ebebeb 100%);border-radius:6px;filter:blur(2.8px)"></div></div>
<div style="position:absolute;left:567.8000000000001px;top:164.6px;width:0.8px;height:258.8px;background:#e2e7ef"></div>
<div style="position:absolute;left:601.0px;top:164.6px;width:0.8px;height:258.8px;background:#e2e7ef"></div>
<div style="position:absolute;left:634.2px;top:164.6px;width:0.8px;height:258.8px;background:#e2e7ef"></div>
<div style="position:absolute;left:667.4px;top:164.6px;width:0.8px;height:258.8px;background:#e2e7ef"></div>
<div style="position:absolute;left:700.6px;top:164.6px;width:0.8px;height:258.8px;background:#e2e7ef"></div>
<div style="position:absolute;left:733.8000000000001px;top:164.6px;width:0.8px;height:258.8px;background:#e2e7ef"></div>
<div style="position:absolute;left:767.0000000000001px;top:164.6px;width:0.8px;height:258.8px;background:#e2e7ef"></div>
<div style="position:absolute;left:800.2px;top:164.6px;width:0.8px;height:258.8px;background:#e2e7ef"></div>
<div style="position:absolute;left:833.4px;top:164.6px;width:0.8px;height:258.8px;background:#e2e7ef"></div>
<div style="position:absolute;left:866.6px;top:164.6px;width:0.8px;height:258.8px;background:#e2e7ef"></div>
<div style="position:absolute;left:899.8000000000001px;top:164.6px;width:0.8px;height:258.8px;background:#e2e7ef"></div>
<div style="position:absolute;left:535.0px;top:196.54999999999998px;width:398.40000000000003px;height:0.8px;background:#e2e7ef"></div>
<div style="position:absolute;left:535.0px;top:228.9px;width:398.40000000000003px;height:0.8px;background:#e2e7ef"></div>
<div style="position:absolute;left:535.0px;top:261.25px;width:398.40000000000003px;height:0.8px;background:#e2e7ef"></div>
<div style="position:absolute;left:535.0px;top:293.6px;width:398.40000000000003px;height:0.8px;background:#e2e7ef"></div>
<div style="position:absolute;left:535.0px;top:325.95000000000005px;width:398.40000000000003px;height:0.8px;background:#e2e7ef"></div>
<div style="position:absolute;left:535.0px;top:358.30000000000007px;width:398.40000000000003px;height:0.8px;background:#e2e7ef"></div>
<div style="position:absolute;left:535.0px;top:390.65000000000003px;width:398.40000000000003px;height:0.8px;background:#e2e7ef"></div>
</div></body></html>
